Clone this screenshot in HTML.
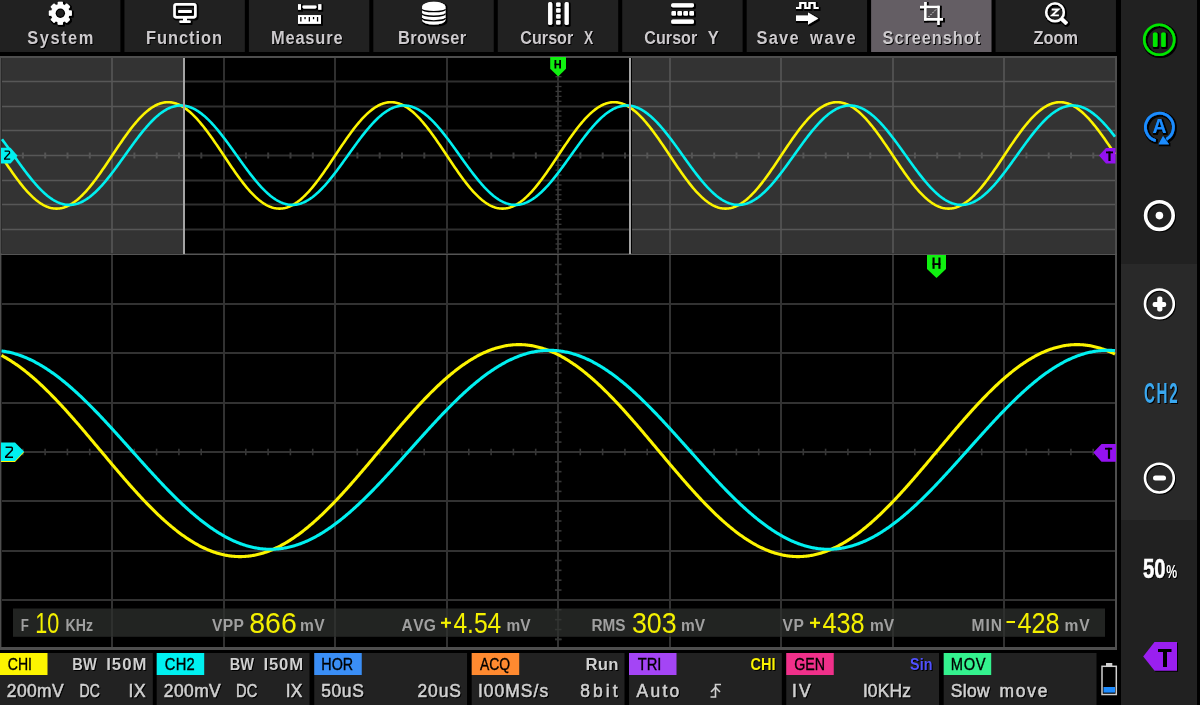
<!DOCTYPE html>
<html><head><meta charset="utf-8"><style>html,body{margin:0;padding:0;background:#000;overflow:hidden}svg{display:block;will-change:transform}</style></head>
<body><svg width="1200" height="705" viewBox="0 0 1200 705">
<rect x="0.00" y="0.00" width="1200.00" height="705.00" fill="#000" />
<rect x="0.00" y="0.00" width="120.40" height="52.00" fill="#212121" />
<rect x="124.44" y="0.00" width="120.40" height="52.00" fill="#212121" />
<rect x="248.89" y="0.00" width="120.40" height="52.00" fill="#212121" />
<rect x="373.33" y="0.00" width="120.40" height="52.00" fill="#212121" />
<rect x="497.78" y="0.00" width="120.40" height="52.00" fill="#212121" />
<rect x="622.22" y="0.00" width="120.40" height="52.00" fill="#212121" />
<rect x="746.67" y="0.00" width="120.40" height="52.00" fill="#212121" />
<rect x="871.11" y="0.00" width="120.40" height="52.00" fill="#645e64" />
<rect x="995.56" y="0.00" width="120.40" height="52.00" fill="#212121" />
<rect x="1121.00" y="0.00" width="76.00" height="264.00" fill="#212121" />
<rect x="1121.00" y="264.00" width="76.00" height="256.00" fill="#292929" />
<rect x="1121.00" y="520.00" width="76.00" height="185.00" fill="#212121" />
<rect x="0.00" y="56.00" width="1117.00" height="594.00" fill="#4e4e4e" />
<rect x="1.40" y="58.00" width="1113.60" height="589.00" fill="#000" />
<rect x="1.40" y="58.00" width="181.60" height="195.30" fill="#333333" />
<rect x="632.00" y="58.00" width="483.00" height="195.30" fill="#333333" />
<line x1="2.00" y1="81.50" x2="183.00" y2="81.50" stroke="#575757" stroke-width="1.4" />
<line x1="185.00" y1="81.50" x2="629.00" y2="81.50" stroke="#2f2f2f" stroke-width="2" />
<line x1="632.00" y1="81.50" x2="1115.00" y2="81.50" stroke="#575757" stroke-width="1.4" />
<line x1="2.00" y1="106.50" x2="183.00" y2="106.50" stroke="#575757" stroke-width="1.4" />
<line x1="185.00" y1="106.50" x2="629.00" y2="106.50" stroke="#2f2f2f" stroke-width="2" />
<line x1="632.00" y1="106.50" x2="1115.00" y2="106.50" stroke="#575757" stroke-width="1.4" />
<line x1="2.00" y1="130.50" x2="183.00" y2="130.50" stroke="#575757" stroke-width="1.4" />
<line x1="185.00" y1="130.50" x2="629.00" y2="130.50" stroke="#2f2f2f" stroke-width="2" />
<line x1="632.00" y1="130.50" x2="1115.00" y2="130.50" stroke="#575757" stroke-width="1.4" />
<line x1="2.00" y1="155.50" x2="183.00" y2="155.50" stroke="#575757" stroke-width="1.4" />
<line x1="185.00" y1="155.50" x2="629.00" y2="155.50" stroke="#2f2f2f" stroke-width="2" />
<line x1="632.00" y1="155.50" x2="1115.00" y2="155.50" stroke="#575757" stroke-width="1.4" />
<line x1="2.00" y1="180.50" x2="183.00" y2="180.50" stroke="#575757" stroke-width="1.4" />
<line x1="185.00" y1="180.50" x2="629.00" y2="180.50" stroke="#2f2f2f" stroke-width="2" />
<line x1="632.00" y1="180.50" x2="1115.00" y2="180.50" stroke="#575757" stroke-width="1.4" />
<line x1="2.00" y1="204.50" x2="183.00" y2="204.50" stroke="#575757" stroke-width="1.4" />
<line x1="185.00" y1="204.50" x2="629.00" y2="204.50" stroke="#2f2f2f" stroke-width="2" />
<line x1="632.00" y1="204.50" x2="1115.00" y2="204.50" stroke="#575757" stroke-width="1.4" />
<line x1="2.00" y1="229.50" x2="183.00" y2="229.50" stroke="#575757" stroke-width="1.4" />
<line x1="185.00" y1="229.50" x2="629.00" y2="229.50" stroke="#2f2f2f" stroke-width="2" />
<line x1="632.00" y1="229.50" x2="1115.00" y2="229.50" stroke="#575757" stroke-width="1.4" />
<line x1="112.00" y1="58.00" x2="112.00" y2="253.30" stroke="#575757" stroke-width="1.6" />
<line x1="224.00" y1="58.00" x2="224.00" y2="253.30" stroke="#2f2f2f" stroke-width="2" />
<line x1="335.00" y1="58.00" x2="335.00" y2="253.30" stroke="#2f2f2f" stroke-width="2" />
<line x1="447.00" y1="58.00" x2="447.00" y2="253.30" stroke="#2f2f2f" stroke-width="2" />
<line x1="558.00" y1="58.00" x2="558.00" y2="253.30" stroke="#2f2f2f" stroke-width="2" />
<line x1="670.00" y1="58.00" x2="670.00" y2="253.30" stroke="#575757" stroke-width="1.6" />
<line x1="781.00" y1="58.00" x2="781.00" y2="253.30" stroke="#575757" stroke-width="1.6" />
<line x1="893.00" y1="58.00" x2="893.00" y2="253.30" stroke="#575757" stroke-width="1.6" />
<line x1="1004.00" y1="58.00" x2="1004.00" y2="253.30" stroke="#575757" stroke-width="1.6" />
<line x1="22.90" y1="152.50" x2="22.90" y2="158.50" stroke="#555555" stroke-width="2" />
<line x1="45.20" y1="152.50" x2="45.20" y2="158.50" stroke="#555555" stroke-width="2" />
<line x1="67.50" y1="152.50" x2="67.50" y2="158.50" stroke="#555555" stroke-width="2" />
<line x1="89.80" y1="152.50" x2="89.80" y2="158.50" stroke="#555555" stroke-width="2" />
<line x1="134.40" y1="152.50" x2="134.40" y2="158.50" stroke="#555555" stroke-width="2" />
<line x1="156.70" y1="152.50" x2="156.70" y2="158.50" stroke="#555555" stroke-width="2" />
<line x1="179.00" y1="152.50" x2="179.00" y2="158.50" stroke="#555555" stroke-width="2" />
<line x1="201.30" y1="152.50" x2="201.30" y2="158.50" stroke="#3a3a3a" stroke-width="2" />
<line x1="245.90" y1="152.50" x2="245.90" y2="158.50" stroke="#3a3a3a" stroke-width="2" />
<line x1="268.20" y1="152.50" x2="268.20" y2="158.50" stroke="#3a3a3a" stroke-width="2" />
<line x1="290.50" y1="152.50" x2="290.50" y2="158.50" stroke="#3a3a3a" stroke-width="2" />
<line x1="312.80" y1="152.50" x2="312.80" y2="158.50" stroke="#3a3a3a" stroke-width="2" />
<line x1="357.40" y1="152.50" x2="357.40" y2="158.50" stroke="#3a3a3a" stroke-width="2" />
<line x1="379.70" y1="152.50" x2="379.70" y2="158.50" stroke="#3a3a3a" stroke-width="2" />
<line x1="402.00" y1="152.50" x2="402.00" y2="158.50" stroke="#3a3a3a" stroke-width="2" />
<line x1="424.30" y1="152.50" x2="424.30" y2="158.50" stroke="#3a3a3a" stroke-width="2" />
<line x1="468.90" y1="152.50" x2="468.90" y2="158.50" stroke="#3a3a3a" stroke-width="2" />
<line x1="491.20" y1="152.50" x2="491.20" y2="158.50" stroke="#3a3a3a" stroke-width="2" />
<line x1="513.50" y1="152.50" x2="513.50" y2="158.50" stroke="#3a3a3a" stroke-width="2" />
<line x1="535.80" y1="152.50" x2="535.80" y2="158.50" stroke="#3a3a3a" stroke-width="2" />
<line x1="580.40" y1="152.50" x2="580.40" y2="158.50" stroke="#3a3a3a" stroke-width="2" />
<line x1="602.70" y1="152.50" x2="602.70" y2="158.50" stroke="#3a3a3a" stroke-width="2" />
<line x1="625.00" y1="152.50" x2="625.00" y2="158.50" stroke="#3a3a3a" stroke-width="2" />
<line x1="647.30" y1="152.50" x2="647.30" y2="158.50" stroke="#555555" stroke-width="2" />
<line x1="691.90" y1="152.50" x2="691.90" y2="158.50" stroke="#555555" stroke-width="2" />
<line x1="714.20" y1="152.50" x2="714.20" y2="158.50" stroke="#555555" stroke-width="2" />
<line x1="736.50" y1="152.50" x2="736.50" y2="158.50" stroke="#555555" stroke-width="2" />
<line x1="758.80" y1="152.50" x2="758.80" y2="158.50" stroke="#555555" stroke-width="2" />
<line x1="803.40" y1="152.50" x2="803.40" y2="158.50" stroke="#555555" stroke-width="2" />
<line x1="825.70" y1="152.50" x2="825.70" y2="158.50" stroke="#555555" stroke-width="2" />
<line x1="848.00" y1="152.50" x2="848.00" y2="158.50" stroke="#555555" stroke-width="2" />
<line x1="870.30" y1="152.50" x2="870.30" y2="158.50" stroke="#555555" stroke-width="2" />
<line x1="914.90" y1="152.50" x2="914.90" y2="158.50" stroke="#555555" stroke-width="2" />
<line x1="937.20" y1="152.50" x2="937.20" y2="158.50" stroke="#555555" stroke-width="2" />
<line x1="959.50" y1="152.50" x2="959.50" y2="158.50" stroke="#555555" stroke-width="2" />
<line x1="981.80" y1="152.50" x2="981.80" y2="158.50" stroke="#555555" stroke-width="2" />
<line x1="1026.40" y1="152.50" x2="1026.40" y2="158.50" stroke="#555555" stroke-width="2" />
<line x1="1048.70" y1="152.50" x2="1048.70" y2="158.50" stroke="#555555" stroke-width="2" />
<line x1="1071.00" y1="152.50" x2="1071.00" y2="158.50" stroke="#555555" stroke-width="2" />
<line x1="1093.30" y1="152.50" x2="1093.30" y2="158.50" stroke="#555555" stroke-width="2" />
<line x1="555.50" y1="61.92" x2="561.50" y2="61.92" stroke="#3a3a3a" stroke-width="1.3" />
<line x1="555.50" y1="66.84" x2="561.50" y2="66.84" stroke="#3a3a3a" stroke-width="1.3" />
<line x1="555.50" y1="71.76" x2="561.50" y2="71.76" stroke="#3a3a3a" stroke-width="1.3" />
<line x1="555.50" y1="76.68" x2="561.50" y2="76.68" stroke="#3a3a3a" stroke-width="1.3" />
<line x1="555.50" y1="86.52" x2="561.50" y2="86.52" stroke="#3a3a3a" stroke-width="1.3" />
<line x1="555.50" y1="91.44" x2="561.50" y2="91.44" stroke="#3a3a3a" stroke-width="1.3" />
<line x1="555.50" y1="96.36" x2="561.50" y2="96.36" stroke="#3a3a3a" stroke-width="1.3" />
<line x1="555.50" y1="101.28" x2="561.50" y2="101.28" stroke="#3a3a3a" stroke-width="1.3" />
<line x1="555.50" y1="111.12" x2="561.50" y2="111.12" stroke="#3a3a3a" stroke-width="1.3" />
<line x1="555.50" y1="116.04" x2="561.50" y2="116.04" stroke="#3a3a3a" stroke-width="1.3" />
<line x1="555.50" y1="120.96" x2="561.50" y2="120.96" stroke="#3a3a3a" stroke-width="1.3" />
<line x1="555.50" y1="125.88" x2="561.50" y2="125.88" stroke="#3a3a3a" stroke-width="1.3" />
<line x1="555.50" y1="135.72" x2="561.50" y2="135.72" stroke="#3a3a3a" stroke-width="1.3" />
<line x1="555.50" y1="140.64" x2="561.50" y2="140.64" stroke="#3a3a3a" stroke-width="1.3" />
<line x1="555.50" y1="145.56" x2="561.50" y2="145.56" stroke="#3a3a3a" stroke-width="1.3" />
<line x1="555.50" y1="150.48" x2="561.50" y2="150.48" stroke="#3a3a3a" stroke-width="1.3" />
<line x1="555.50" y1="160.32" x2="561.50" y2="160.32" stroke="#3a3a3a" stroke-width="1.3" />
<line x1="555.50" y1="165.24" x2="561.50" y2="165.24" stroke="#3a3a3a" stroke-width="1.3" />
<line x1="555.50" y1="170.16" x2="561.50" y2="170.16" stroke="#3a3a3a" stroke-width="1.3" />
<line x1="555.50" y1="175.08" x2="561.50" y2="175.08" stroke="#3a3a3a" stroke-width="1.3" />
<line x1="555.50" y1="184.92" x2="561.50" y2="184.92" stroke="#3a3a3a" stroke-width="1.3" />
<line x1="555.50" y1="189.84" x2="561.50" y2="189.84" stroke="#3a3a3a" stroke-width="1.3" />
<line x1="555.50" y1="194.76" x2="561.50" y2="194.76" stroke="#3a3a3a" stroke-width="1.3" />
<line x1="555.50" y1="199.68" x2="561.50" y2="199.68" stroke="#3a3a3a" stroke-width="1.3" />
<line x1="555.50" y1="209.52" x2="561.50" y2="209.52" stroke="#3a3a3a" stroke-width="1.3" />
<line x1="555.50" y1="214.44" x2="561.50" y2="214.44" stroke="#3a3a3a" stroke-width="1.3" />
<line x1="555.50" y1="219.36" x2="561.50" y2="219.36" stroke="#3a3a3a" stroke-width="1.3" />
<line x1="555.50" y1="224.28" x2="561.50" y2="224.28" stroke="#3a3a3a" stroke-width="1.3" />
<line x1="555.50" y1="234.12" x2="561.50" y2="234.12" stroke="#3a3a3a" stroke-width="1.3" />
<line x1="555.50" y1="239.04" x2="561.50" y2="239.04" stroke="#3a3a3a" stroke-width="1.3" />
<line x1="555.50" y1="243.96" x2="561.50" y2="243.96" stroke="#3a3a3a" stroke-width="1.3" />
<line x1="555.50" y1="248.88" x2="561.50" y2="248.88" stroke="#3a3a3a" stroke-width="1.3" />
<line x1="0.00" y1="254.20" x2="1117.00" y2="254.20" stroke="#555555" stroke-width="1.6" />
<line x1="184.00" y1="58.00" x2="184.00" y2="254.00" stroke="#a4a4a4" stroke-width="2" />
<line x1="630.00" y1="58.00" x2="630.00" y2="254.00" stroke="#a4a4a4" stroke-width="2" />
<line x1="2.00" y1="304.00" x2="1115.00" y2="304.00" stroke="#323232" stroke-width="2" />
<line x1="2.00" y1="353.00" x2="1115.00" y2="353.00" stroke="#323232" stroke-width="2" />
<line x1="2.00" y1="403.00" x2="1115.00" y2="403.00" stroke="#323232" stroke-width="2" />
<line x1="2.00" y1="452.00" x2="1115.00" y2="452.00" stroke="#323232" stroke-width="2" />
<line x1="2.00" y1="501.00" x2="1115.00" y2="501.00" stroke="#323232" stroke-width="2" />
<line x1="2.00" y1="551.00" x2="1115.00" y2="551.00" stroke="#323232" stroke-width="2" />
<line x1="2.00" y1="600.00" x2="1115.00" y2="600.00" stroke="#323232" stroke-width="2" />
<line x1="112.00" y1="255.00" x2="112.00" y2="647.00" stroke="#323232" stroke-width="2" />
<line x1="224.00" y1="255.00" x2="224.00" y2="647.00" stroke="#323232" stroke-width="2" />
<line x1="335.00" y1="255.00" x2="335.00" y2="647.00" stroke="#323232" stroke-width="2" />
<line x1="447.00" y1="255.00" x2="447.00" y2="647.00" stroke="#323232" stroke-width="2" />
<line x1="558.00" y1="255.00" x2="558.00" y2="647.00" stroke="#323232" stroke-width="2" />
<line x1="670.00" y1="255.00" x2="670.00" y2="647.00" stroke="#323232" stroke-width="2" />
<line x1="781.00" y1="255.00" x2="781.00" y2="647.00" stroke="#323232" stroke-width="2" />
<line x1="893.00" y1="255.00" x2="893.00" y2="647.00" stroke="#323232" stroke-width="2" />
<line x1="1004.00" y1="255.00" x2="1004.00" y2="647.00" stroke="#323232" stroke-width="2" />
<line x1="22.80" y1="448.70" x2="22.80" y2="455.30" stroke="#363636" stroke-width="1.6" />
<line x1="45.10" y1="448.70" x2="45.10" y2="455.30" stroke="#363636" stroke-width="1.6" />
<line x1="67.40" y1="448.70" x2="67.40" y2="455.30" stroke="#363636" stroke-width="1.6" />
<line x1="89.70" y1="448.70" x2="89.70" y2="455.30" stroke="#363636" stroke-width="1.6" />
<line x1="134.30" y1="448.70" x2="134.30" y2="455.30" stroke="#363636" stroke-width="1.6" />
<line x1="156.60" y1="448.70" x2="156.60" y2="455.30" stroke="#363636" stroke-width="1.6" />
<line x1="178.90" y1="448.70" x2="178.90" y2="455.30" stroke="#363636" stroke-width="1.6" />
<line x1="201.20" y1="448.70" x2="201.20" y2="455.30" stroke="#363636" stroke-width="1.6" />
<line x1="245.80" y1="448.70" x2="245.80" y2="455.30" stroke="#363636" stroke-width="1.6" />
<line x1="268.10" y1="448.70" x2="268.10" y2="455.30" stroke="#363636" stroke-width="1.6" />
<line x1="290.40" y1="448.70" x2="290.40" y2="455.30" stroke="#363636" stroke-width="1.6" />
<line x1="312.70" y1="448.70" x2="312.70" y2="455.30" stroke="#363636" stroke-width="1.6" />
<line x1="357.30" y1="448.70" x2="357.30" y2="455.30" stroke="#363636" stroke-width="1.6" />
<line x1="379.60" y1="448.70" x2="379.60" y2="455.30" stroke="#363636" stroke-width="1.6" />
<line x1="401.90" y1="448.70" x2="401.90" y2="455.30" stroke="#363636" stroke-width="1.6" />
<line x1="424.20" y1="448.70" x2="424.20" y2="455.30" stroke="#363636" stroke-width="1.6" />
<line x1="468.80" y1="448.70" x2="468.80" y2="455.30" stroke="#363636" stroke-width="1.6" />
<line x1="491.10" y1="448.70" x2="491.10" y2="455.30" stroke="#363636" stroke-width="1.6" />
<line x1="513.40" y1="448.70" x2="513.40" y2="455.30" stroke="#363636" stroke-width="1.6" />
<line x1="535.70" y1="448.70" x2="535.70" y2="455.30" stroke="#363636" stroke-width="1.6" />
<line x1="580.30" y1="448.70" x2="580.30" y2="455.30" stroke="#363636" stroke-width="1.6" />
<line x1="602.60" y1="448.70" x2="602.60" y2="455.30" stroke="#363636" stroke-width="1.6" />
<line x1="624.90" y1="448.70" x2="624.90" y2="455.30" stroke="#363636" stroke-width="1.6" />
<line x1="647.20" y1="448.70" x2="647.20" y2="455.30" stroke="#363636" stroke-width="1.6" />
<line x1="691.80" y1="448.70" x2="691.80" y2="455.30" stroke="#363636" stroke-width="1.6" />
<line x1="714.10" y1="448.70" x2="714.10" y2="455.30" stroke="#363636" stroke-width="1.6" />
<line x1="736.40" y1="448.70" x2="736.40" y2="455.30" stroke="#363636" stroke-width="1.6" />
<line x1="758.70" y1="448.70" x2="758.70" y2="455.30" stroke="#363636" stroke-width="1.6" />
<line x1="803.30" y1="448.70" x2="803.30" y2="455.30" stroke="#363636" stroke-width="1.6" />
<line x1="825.60" y1="448.70" x2="825.60" y2="455.30" stroke="#363636" stroke-width="1.6" />
<line x1="847.90" y1="448.70" x2="847.90" y2="455.30" stroke="#363636" stroke-width="1.6" />
<line x1="870.20" y1="448.70" x2="870.20" y2="455.30" stroke="#363636" stroke-width="1.6" />
<line x1="914.80" y1="448.70" x2="914.80" y2="455.30" stroke="#363636" stroke-width="1.6" />
<line x1="937.10" y1="448.70" x2="937.10" y2="455.30" stroke="#363636" stroke-width="1.6" />
<line x1="959.40" y1="448.70" x2="959.40" y2="455.30" stroke="#363636" stroke-width="1.6" />
<line x1="981.70" y1="448.70" x2="981.70" y2="455.30" stroke="#363636" stroke-width="1.6" />
<line x1="1026.30" y1="448.70" x2="1026.30" y2="455.30" stroke="#363636" stroke-width="1.6" />
<line x1="1048.60" y1="448.70" x2="1048.60" y2="455.30" stroke="#363636" stroke-width="1.6" />
<line x1="1070.90" y1="448.70" x2="1070.90" y2="455.30" stroke="#363636" stroke-width="1.6" />
<line x1="1093.20" y1="448.70" x2="1093.20" y2="455.30" stroke="#363636" stroke-width="1.6" />
<line x1="555.00" y1="264.47" x2="561.50" y2="264.47" stroke="#363636" stroke-width="1.6" />
<line x1="555.00" y1="274.33" x2="561.50" y2="274.33" stroke="#363636" stroke-width="1.6" />
<line x1="555.00" y1="284.20" x2="561.50" y2="284.20" stroke="#363636" stroke-width="1.6" />
<line x1="555.00" y1="294.07" x2="561.50" y2="294.07" stroke="#363636" stroke-width="1.6" />
<line x1="555.00" y1="313.80" x2="561.50" y2="313.80" stroke="#363636" stroke-width="1.6" />
<line x1="555.00" y1="323.67" x2="561.50" y2="323.67" stroke="#363636" stroke-width="1.6" />
<line x1="555.00" y1="333.53" x2="561.50" y2="333.53" stroke="#363636" stroke-width="1.6" />
<line x1="555.00" y1="343.40" x2="561.50" y2="343.40" stroke="#363636" stroke-width="1.6" />
<line x1="555.00" y1="363.13" x2="561.50" y2="363.13" stroke="#363636" stroke-width="1.6" />
<line x1="555.00" y1="373.00" x2="561.50" y2="373.00" stroke="#363636" stroke-width="1.6" />
<line x1="555.00" y1="382.87" x2="561.50" y2="382.87" stroke="#363636" stroke-width="1.6" />
<line x1="555.00" y1="392.73" x2="561.50" y2="392.73" stroke="#363636" stroke-width="1.6" />
<line x1="555.00" y1="412.47" x2="561.50" y2="412.47" stroke="#363636" stroke-width="1.6" />
<line x1="555.00" y1="422.33" x2="561.50" y2="422.33" stroke="#363636" stroke-width="1.6" />
<line x1="555.00" y1="432.20" x2="561.50" y2="432.20" stroke="#363636" stroke-width="1.6" />
<line x1="555.00" y1="442.07" x2="561.50" y2="442.07" stroke="#363636" stroke-width="1.6" />
<line x1="555.00" y1="461.80" x2="561.50" y2="461.80" stroke="#363636" stroke-width="1.6" />
<line x1="555.00" y1="471.67" x2="561.50" y2="471.67" stroke="#363636" stroke-width="1.6" />
<line x1="555.00" y1="481.53" x2="561.50" y2="481.53" stroke="#363636" stroke-width="1.6" />
<line x1="555.00" y1="491.40" x2="561.50" y2="491.40" stroke="#363636" stroke-width="1.6" />
<line x1="555.00" y1="511.13" x2="561.50" y2="511.13" stroke="#363636" stroke-width="1.6" />
<line x1="555.00" y1="521.00" x2="561.50" y2="521.00" stroke="#363636" stroke-width="1.6" />
<line x1="555.00" y1="530.86" x2="561.50" y2="530.86" stroke="#363636" stroke-width="1.6" />
<line x1="555.00" y1="540.73" x2="561.50" y2="540.73" stroke="#363636" stroke-width="1.6" />
<line x1="555.00" y1="560.46" x2="561.50" y2="560.46" stroke="#363636" stroke-width="1.6" />
<line x1="555.00" y1="570.33" x2="561.50" y2="570.33" stroke="#363636" stroke-width="1.6" />
<line x1="555.00" y1="580.20" x2="561.50" y2="580.20" stroke="#363636" stroke-width="1.6" />
<line x1="555.00" y1="590.06" x2="561.50" y2="590.06" stroke="#363636" stroke-width="1.6" />
<line x1="555.00" y1="609.80" x2="561.50" y2="609.80" stroke="#363636" stroke-width="1.6" />
<line x1="555.00" y1="619.66" x2="561.50" y2="619.66" stroke="#363636" stroke-width="1.6" />
<line x1="555.00" y1="629.53" x2="561.50" y2="629.53" stroke="#363636" stroke-width="1.6" />
<line x1="555.00" y1="639.40" x2="561.50" y2="639.40" stroke="#363636" stroke-width="1.6" />
<polyline points="2.0,157.27 3.0,158.77 4.0,160.26 5.0,161.76 6.0,163.24 7.0,164.72 8.0,166.19 9.0,167.66 10.0,169.11 11.0,170.55 12.0,171.98 13.0,173.40 14.0,174.80 15.0,176.19 16.0,177.56 17.0,178.92 18.0,180.25 19.0,181.57 20.0,182.86 21.0,184.13 22.0,185.38 23.0,186.61 24.0,187.81 25.0,188.99 26.0,190.14 27.0,191.26 28.0,192.35 29.0,193.41 30.0,194.45 31.0,195.45 32.0,196.42 33.0,197.36 34.0,198.26 35.0,199.13 36.0,199.97 37.0,200.77 38.0,201.53 39.0,202.26 40.0,202.95 41.0,203.61 42.0,204.22 43.0,204.80 44.0,205.33 45.0,205.83 46.0,206.29 47.0,206.71 48.0,207.08 49.0,207.42 50.0,207.71 51.0,207.96 52.0,208.17 53.0,208.34 54.0,208.47 55.0,208.55 56.0,208.59 57.0,208.59 58.0,208.55 59.0,208.47 60.0,208.34 61.0,208.17 62.0,207.96 63.0,207.71 64.0,207.42 65.0,207.08 66.0,206.71 67.0,206.29 68.0,205.83 69.0,205.33 70.0,204.80 71.0,204.22 72.0,203.61 73.0,202.95 74.0,202.26 75.0,201.53 76.0,200.77 77.0,199.97 78.0,199.13 79.0,198.26 80.0,197.36 81.0,196.42 82.0,195.45 83.0,194.45 84.0,193.41 85.0,192.35 86.0,191.26 87.0,190.14 88.0,188.99 89.0,187.81 90.0,186.61 91.0,185.38 92.0,184.13 93.0,182.86 94.0,181.57 95.0,180.25 96.0,178.92 97.0,177.56 98.0,176.19 99.0,174.80 100.0,173.40 101.0,171.98 102.0,170.55 103.0,169.11 104.0,167.66 105.0,166.19 106.0,164.72 107.0,163.24 108.0,161.76 109.0,160.26 110.0,158.77 111.0,157.27 112.0,155.77 113.0,154.28 114.0,152.78 115.0,151.28 116.0,149.79 117.0,148.30 118.0,146.82 119.0,145.34 120.0,143.88 121.0,142.42 122.0,140.97 123.0,139.53 124.0,138.11 125.0,136.70 126.0,135.30 127.0,133.92 128.0,132.56 129.0,131.21 130.0,129.89 131.0,128.58 132.0,127.30 133.0,126.04 134.0,124.80 135.0,123.59 136.0,122.40 137.0,121.24 138.0,120.10 139.0,118.99 140.0,117.91 141.0,116.87 142.0,115.85 143.0,114.86 144.0,113.91 145.0,112.99 146.0,112.10 147.0,111.24 148.0,110.43 149.0,109.64 150.0,108.90 151.0,108.19 152.0,107.52 153.0,106.88 154.0,106.29 155.0,105.73 156.0,105.21 157.0,104.73 158.0,104.30 159.0,103.90 160.0,103.55 161.0,103.23 162.0,102.96 163.0,102.73 164.0,102.54 165.0,102.39 166.0,102.28 167.0,102.22 168.0,102.20 169.0,102.22 170.0,102.28 171.0,102.39 172.0,102.54 173.0,102.73 174.0,102.96 175.0,103.23 176.0,103.55 177.0,103.90 178.0,104.30 179.0,104.73 180.0,105.21 181.0,105.73 182.0,106.29 183.0,106.88 184.0,107.52 185.0,108.19 186.0,108.90 187.0,109.64 188.0,110.43 189.0,111.24 190.0,112.10 191.0,112.99 192.0,113.91 193.0,114.86 194.0,115.85 195.0,116.87 196.0,117.91 197.0,118.99 198.0,120.10 199.0,121.24 200.0,122.40 201.0,123.59 202.0,124.80 203.0,126.04 204.0,127.30 205.0,128.58 206.0,129.89 207.0,131.21 208.0,132.56 209.0,133.92 210.0,135.30 211.0,136.70 212.0,138.11 213.0,139.53 214.0,140.97 215.0,142.42 216.0,143.88 217.0,145.34 218.0,146.82 219.0,148.30 220.0,149.79 221.0,151.28 222.0,152.78 223.0,154.28 224.0,155.77 225.0,157.27 226.0,158.77 227.0,160.26 228.0,161.76 229.0,163.24 230.0,164.72 231.0,166.19 232.0,167.66 233.0,169.11 234.0,170.55 235.0,171.98 236.0,173.40 237.0,174.80 238.0,176.19 239.0,177.56 240.0,178.92 241.0,180.25 242.0,181.57 243.0,182.86 244.0,184.13 245.0,185.38 246.0,186.61 247.0,187.81 248.0,188.99 249.0,190.14 250.0,191.26 251.0,192.35 252.0,193.41 253.0,194.45 254.0,195.45 255.0,196.42 256.0,197.36 257.0,198.26 258.0,199.13 259.0,199.97 260.0,200.77 261.0,201.53 262.0,202.26 263.0,202.95 264.0,203.61 265.0,204.22 266.0,204.80 267.0,205.33 268.0,205.83 269.0,206.29 270.0,206.71 271.0,207.08 272.0,207.42 273.0,207.71 274.0,207.96 275.0,208.17 276.0,208.34 277.0,208.47 278.0,208.55 279.0,208.59 280.0,208.59 281.0,208.55 282.0,208.47 283.0,208.34 284.0,208.17 285.0,207.96 286.0,207.71 287.0,207.42 288.0,207.08 289.0,206.71 290.0,206.29 291.0,205.83 292.0,205.33 293.0,204.80 294.0,204.22 295.0,203.61 296.0,202.95 297.0,202.26 298.0,201.53 299.0,200.77 300.0,199.97 301.0,199.13 302.0,198.26 303.0,197.36 304.0,196.42 305.0,195.45 306.0,194.45 307.0,193.41 308.0,192.35 309.0,191.26 310.0,190.14 311.0,188.99 312.0,187.81 313.0,186.61 314.0,185.38 315.0,184.13 316.0,182.86 317.0,181.57 318.0,180.25 319.0,178.92 320.0,177.56 321.0,176.19 322.0,174.80 323.0,173.40 324.0,171.98 325.0,170.55 326.0,169.11 327.0,167.66 328.0,166.19 329.0,164.72 330.0,163.24 331.0,161.76 332.0,160.26 333.0,158.77 334.0,157.27 335.0,155.77 336.0,154.28 337.0,152.78 338.0,151.28 339.0,149.79 340.0,148.30 341.0,146.82 342.0,145.34 343.0,143.88 344.0,142.42 345.0,140.97 346.0,139.53 347.0,138.11 348.0,136.70 349.0,135.30 350.0,133.92 351.0,132.56 352.0,131.21 353.0,129.89 354.0,128.58 355.0,127.30 356.0,126.04 357.0,124.80 358.0,123.59 359.0,122.40 360.0,121.24 361.0,120.10 362.0,118.99 363.0,117.91 364.0,116.87 365.0,115.85 366.0,114.86 367.0,113.91 368.0,112.99 369.0,112.10 370.0,111.24 371.0,110.43 372.0,109.64 373.0,108.90 374.0,108.19 375.0,107.52 376.0,106.88 377.0,106.29 378.0,105.73 379.0,105.21 380.0,104.73 381.0,104.30 382.0,103.90 383.0,103.55 384.0,103.23 385.0,102.96 386.0,102.73 387.0,102.54 388.0,102.39 389.0,102.28 390.0,102.22 391.0,102.20 392.0,102.22 393.0,102.28 394.0,102.39 395.0,102.54 396.0,102.73 397.0,102.96 398.0,103.23 399.0,103.55 400.0,103.90 401.0,104.30 402.0,104.73 403.0,105.21 404.0,105.73 405.0,106.29 406.0,106.88 407.0,107.52 408.0,108.19 409.0,108.90 410.0,109.64 411.0,110.43 412.0,111.24 413.0,112.10 414.0,112.99 415.0,113.91 416.0,114.86 417.0,115.85 418.0,116.87 419.0,117.91 420.0,118.99 421.0,120.10 422.0,121.24 423.0,122.40 424.0,123.59 425.0,124.80 426.0,126.04 427.0,127.30 428.0,128.58 429.0,129.89 430.0,131.21 431.0,132.56 432.0,133.92 433.0,135.30 434.0,136.70 435.0,138.11 436.0,139.53 437.0,140.97 438.0,142.42 439.0,143.88 440.0,145.34 441.0,146.82 442.0,148.30 443.0,149.79 444.0,151.28 445.0,152.78 446.0,154.28 447.0,155.77 448.0,157.27 449.0,158.77 450.0,160.26 451.0,161.76 452.0,163.24 453.0,164.72 454.0,166.19 455.0,167.66 456.0,169.11 457.0,170.55 458.0,171.98 459.0,173.40 460.0,174.80 461.0,176.19 462.0,177.56 463.0,178.92 464.0,180.25 465.0,181.57 466.0,182.86 467.0,184.13 468.0,185.38 469.0,186.61 470.0,187.81 471.0,188.99 472.0,190.14 473.0,191.26 474.0,192.35 475.0,193.41 476.0,194.45 477.0,195.45 478.0,196.42 479.0,197.36 480.0,198.26 481.0,199.13 482.0,199.97 483.0,200.77 484.0,201.53 485.0,202.26 486.0,202.95 487.0,203.61 488.0,204.22 489.0,204.80 490.0,205.33 491.0,205.83 492.0,206.29 493.0,206.71 494.0,207.08 495.0,207.42 496.0,207.71 497.0,207.96 498.0,208.17 499.0,208.34 500.0,208.47 501.0,208.55 502.0,208.59 503.0,208.59 504.0,208.55 505.0,208.47 506.0,208.34 507.0,208.17 508.0,207.96 509.0,207.71 510.0,207.42 511.0,207.08 512.0,206.71 513.0,206.29 514.0,205.83 515.0,205.33 516.0,204.80 517.0,204.22 518.0,203.61 519.0,202.95 520.0,202.26 521.0,201.53 522.0,200.77 523.0,199.97 524.0,199.13 525.0,198.26 526.0,197.36 527.0,196.42 528.0,195.45 529.0,194.45 530.0,193.41 531.0,192.35 532.0,191.26 533.0,190.14 534.0,188.99 535.0,187.81 536.0,186.61 537.0,185.38 538.0,184.13 539.0,182.86 540.0,181.57 541.0,180.25 542.0,178.92 543.0,177.56 544.0,176.19 545.0,174.80 546.0,173.40 547.0,171.98 548.0,170.55 549.0,169.11 550.0,167.66 551.0,166.19 552.0,164.72 553.0,163.24 554.0,161.76 555.0,160.26 556.0,158.77 557.0,157.27 558.0,155.77 559.0,154.28 560.0,152.78 561.0,151.28 562.0,149.79 563.0,148.30 564.0,146.82 565.0,145.34 566.0,143.88 567.0,142.42 568.0,140.97 569.0,139.53 570.0,138.11 571.0,136.70 572.0,135.30 573.0,133.92 574.0,132.56 575.0,131.21 576.0,129.89 577.0,128.58 578.0,127.30 579.0,126.04 580.0,124.80 581.0,123.59 582.0,122.40 583.0,121.24 584.0,120.10 585.0,118.99 586.0,117.91 587.0,116.87 588.0,115.85 589.0,114.86 590.0,113.91 591.0,112.99 592.0,112.10 593.0,111.24 594.0,110.43 595.0,109.64 596.0,108.90 597.0,108.19 598.0,107.52 599.0,106.88 600.0,106.29 601.0,105.73 602.0,105.21 603.0,104.73 604.0,104.30 605.0,103.90 606.0,103.55 607.0,103.23 608.0,102.96 609.0,102.73 610.0,102.54 611.0,102.39 612.0,102.28 613.0,102.22 614.0,102.20 615.0,102.22 616.0,102.28 617.0,102.39 618.0,102.54 619.0,102.73 620.0,102.96 621.0,103.23 622.0,103.55 623.0,103.90 624.0,104.30 625.0,104.73 626.0,105.21 627.0,105.73 628.0,106.29 629.0,106.88 630.0,107.52 631.0,108.19 632.0,108.90 633.0,109.64 634.0,110.43 635.0,111.24 636.0,112.10 637.0,112.99 638.0,113.91 639.0,114.86 640.0,115.85 641.0,116.87 642.0,117.91 643.0,118.99 644.0,120.10 645.0,121.24 646.0,122.40 647.0,123.59 648.0,124.80 649.0,126.04 650.0,127.30 651.0,128.58 652.0,129.89 653.0,131.21 654.0,132.56 655.0,133.92 656.0,135.30 657.0,136.70 658.0,138.11 659.0,139.53 660.0,140.97 661.0,142.42 662.0,143.88 663.0,145.34 664.0,146.82 665.0,148.30 666.0,149.79 667.0,151.28 668.0,152.78 669.0,154.28 670.0,155.77 671.0,157.27 672.0,158.77 673.0,160.26 674.0,161.76 675.0,163.24 676.0,164.72 677.0,166.19 678.0,167.66 679.0,169.11 680.0,170.55 681.0,171.98 682.0,173.40 683.0,174.80 684.0,176.19 685.0,177.56 686.0,178.92 687.0,180.25 688.0,181.57 689.0,182.86 690.0,184.13 691.0,185.38 692.0,186.61 693.0,187.81 694.0,188.99 695.0,190.14 696.0,191.26 697.0,192.35 698.0,193.41 699.0,194.45 700.0,195.45 701.0,196.42 702.0,197.36 703.0,198.26 704.0,199.13 705.0,199.97 706.0,200.77 707.0,201.53 708.0,202.26 709.0,202.95 710.0,203.61 711.0,204.22 712.0,204.80 713.0,205.33 714.0,205.83 715.0,206.29 716.0,206.71 717.0,207.08 718.0,207.42 719.0,207.71 720.0,207.96 721.0,208.17 722.0,208.34 723.0,208.47 724.0,208.55 725.0,208.59 726.0,208.59 727.0,208.55 728.0,208.47 729.0,208.34 730.0,208.17 731.0,207.96 732.0,207.71 733.0,207.42 734.0,207.08 735.0,206.71 736.0,206.29 737.0,205.83 738.0,205.33 739.0,204.80 740.0,204.22 741.0,203.61 742.0,202.95 743.0,202.26 744.0,201.53 745.0,200.77 746.0,199.97 747.0,199.13 748.0,198.26 749.0,197.36 750.0,196.42 751.0,195.45 752.0,194.45 753.0,193.41 754.0,192.35 755.0,191.26 756.0,190.14 757.0,188.99 758.0,187.81 759.0,186.61 760.0,185.38 761.0,184.13 762.0,182.86 763.0,181.57 764.0,180.25 765.0,178.92 766.0,177.56 767.0,176.19 768.0,174.80 769.0,173.40 770.0,171.98 771.0,170.55 772.0,169.11 773.0,167.66 774.0,166.19 775.0,164.72 776.0,163.24 777.0,161.76 778.0,160.26 779.0,158.77 780.0,157.27 781.0,155.77 782.0,154.28 783.0,152.78 784.0,151.28 785.0,149.79 786.0,148.30 787.0,146.82 788.0,145.34 789.0,143.88 790.0,142.42 791.0,140.97 792.0,139.53 793.0,138.11 794.0,136.70 795.0,135.30 796.0,133.92 797.0,132.56 798.0,131.21 799.0,129.89 800.0,128.58 801.0,127.30 802.0,126.04 803.0,124.80 804.0,123.59 805.0,122.40 806.0,121.24 807.0,120.10 808.0,118.99 809.0,117.91 810.0,116.87 811.0,115.85 812.0,114.86 813.0,113.91 814.0,112.99 815.0,112.10 816.0,111.24 817.0,110.43 818.0,109.64 819.0,108.90 820.0,108.19 821.0,107.52 822.0,106.88 823.0,106.29 824.0,105.73 825.0,105.21 826.0,104.73 827.0,104.30 828.0,103.90 829.0,103.55 830.0,103.23 831.0,102.96 832.0,102.73 833.0,102.54 834.0,102.39 835.0,102.28 836.0,102.22 837.0,102.20 838.0,102.22 839.0,102.28 840.0,102.39 841.0,102.54 842.0,102.73 843.0,102.96 844.0,103.23 845.0,103.55 846.0,103.90 847.0,104.30 848.0,104.73 849.0,105.21 850.0,105.73 851.0,106.29 852.0,106.88 853.0,107.52 854.0,108.19 855.0,108.90 856.0,109.64 857.0,110.43 858.0,111.24 859.0,112.10 860.0,112.99 861.0,113.91 862.0,114.86 863.0,115.85 864.0,116.87 865.0,117.91 866.0,118.99 867.0,120.10 868.0,121.24 869.0,122.40 870.0,123.59 871.0,124.80 872.0,126.04 873.0,127.30 874.0,128.58 875.0,129.89 876.0,131.21 877.0,132.56 878.0,133.92 879.0,135.30 880.0,136.70 881.0,138.11 882.0,139.53 883.0,140.97 884.0,142.42 885.0,143.88 886.0,145.34 887.0,146.82 888.0,148.30 889.0,149.79 890.0,151.28 891.0,152.78 892.0,154.28 893.0,155.77 894.0,157.27 895.0,158.77 896.0,160.26 897.0,161.76 898.0,163.24 899.0,164.72 900.0,166.19 901.0,167.66 902.0,169.11 903.0,170.55 904.0,171.98 905.0,173.40 906.0,174.80 907.0,176.19 908.0,177.56 909.0,178.92 910.0,180.25 911.0,181.57 912.0,182.86 913.0,184.13 914.0,185.38 915.0,186.61 916.0,187.81 917.0,188.99 918.0,190.14 919.0,191.26 920.0,192.35 921.0,193.41 922.0,194.45 923.0,195.45 924.0,196.42 925.0,197.36 926.0,198.26 927.0,199.13 928.0,199.97 929.0,200.77 930.0,201.53 931.0,202.26 932.0,202.95 933.0,203.61 934.0,204.22 935.0,204.80 936.0,205.33 937.0,205.83 938.0,206.29 939.0,206.71 940.0,207.08 941.0,207.42 942.0,207.71 943.0,207.96 944.0,208.17 945.0,208.34 946.0,208.47 947.0,208.55 948.0,208.59 949.0,208.59 950.0,208.55 951.0,208.47 952.0,208.34 953.0,208.17 954.0,207.96 955.0,207.71 956.0,207.42 957.0,207.08 958.0,206.71 959.0,206.29 960.0,205.83 961.0,205.33 962.0,204.80 963.0,204.22 964.0,203.61 965.0,202.95 966.0,202.26 967.0,201.53 968.0,200.77 969.0,199.97 970.0,199.13 971.0,198.26 972.0,197.36 973.0,196.42 974.0,195.45 975.0,194.45 976.0,193.41 977.0,192.35 978.0,191.26 979.0,190.14 980.0,188.99 981.0,187.81 982.0,186.61 983.0,185.38 984.0,184.13 985.0,182.86 986.0,181.57 987.0,180.25 988.0,178.92 989.0,177.56 990.0,176.19 991.0,174.80 992.0,173.40 993.0,171.98 994.0,170.55 995.0,169.11 996.0,167.66 997.0,166.19 998.0,164.72 999.0,163.24 1000.0,161.76 1001.0,160.26 1002.0,158.77 1003.0,157.27 1004.0,155.77 1005.0,154.28 1006.0,152.78 1007.0,151.28 1008.0,149.79 1009.0,148.30 1010.0,146.82 1011.0,145.34 1012.0,143.88 1013.0,142.42 1014.0,140.97 1015.0,139.53 1016.0,138.11 1017.0,136.70 1018.0,135.30 1019.0,133.92 1020.0,132.56 1021.0,131.21 1022.0,129.89 1023.0,128.58 1024.0,127.30 1025.0,126.04 1026.0,124.80 1027.0,123.59 1028.0,122.40 1029.0,121.24 1030.0,120.10 1031.0,118.99 1032.0,117.91 1033.0,116.87 1034.0,115.85 1035.0,114.86 1036.0,113.91 1037.0,112.99 1038.0,112.10 1039.0,111.24 1040.0,110.43 1041.0,109.64 1042.0,108.90 1043.0,108.19 1044.0,107.52 1045.0,106.88 1046.0,106.29 1047.0,105.73 1048.0,105.21 1049.0,104.73 1050.0,104.30 1051.0,103.90 1052.0,103.55 1053.0,103.23 1054.0,102.96 1055.0,102.73 1056.0,102.54 1057.0,102.39 1058.0,102.28 1059.0,102.22 1060.0,102.20 1061.0,102.22 1062.0,102.28 1063.0,102.39 1064.0,102.54 1065.0,102.73 1066.0,102.96 1067.0,103.23 1068.0,103.55 1069.0,103.90 1070.0,104.30 1071.0,104.73 1072.0,105.21 1073.0,105.73 1074.0,106.29 1075.0,106.88 1076.0,107.52 1077.0,108.19 1078.0,108.90 1079.0,109.64 1080.0,110.43 1081.0,111.24 1082.0,112.10 1083.0,112.99 1084.0,113.91 1085.0,114.86 1086.0,115.85 1087.0,116.87 1088.0,117.91 1089.0,118.99 1090.0,120.10 1091.0,121.24 1092.0,122.40 1093.0,123.59 1094.0,124.80 1095.0,126.04 1096.0,127.30 1097.0,128.58 1098.0,129.89 1099.0,131.21 1100.0,132.56 1101.0,133.92 1102.0,135.30 1103.0,136.70 1104.0,138.11 1105.0,139.53 1106.0,140.97 1107.0,142.42 1108.0,143.88 1109.0,145.34 1110.0,146.82 1111.0,148.30 1112.0,149.79 1113.0,151.28 1114.0,152.78 1115.0,154.28" fill="none" stroke="#fcf400" stroke-width="2.6" stroke-linejoin="round"/>
<polyline points="2.0,139.31 3.0,140.64 4.0,141.99 5.0,143.34 6.0,144.71 7.0,146.08 8.0,147.46 9.0,148.85 10.0,150.24 11.0,151.63 12.0,153.03 13.0,154.43 14.0,155.83 15.0,157.23 16.0,158.63 17.0,160.02 18.0,161.42 19.0,162.80 20.0,164.18 21.0,165.56 22.0,166.92 23.0,168.28 24.0,169.62 25.0,170.96 26.0,172.28 27.0,173.59 28.0,174.88 29.0,176.16 30.0,177.42 31.0,178.66 32.0,179.89 33.0,181.09 34.0,182.28 35.0,183.44 36.0,184.58 37.0,185.70 38.0,186.79 39.0,187.86 40.0,188.90 41.0,189.92 42.0,190.91 43.0,191.87 44.0,192.80 45.0,193.70 46.0,194.57 47.0,195.41 48.0,196.22 49.0,196.99 50.0,197.73 51.0,198.44 52.0,199.11 53.0,199.75 54.0,200.35 55.0,200.92 56.0,201.45 57.0,201.95 58.0,202.40 59.0,202.82 60.0,203.20 61.0,203.55 62.0,203.85 63.0,204.12 64.0,204.35 65.0,204.54 66.0,204.69 67.0,204.80 68.0,204.87 69.0,204.90 70.0,204.89 71.0,204.84 72.0,204.76 73.0,204.63 74.0,204.46 75.0,204.26 76.0,204.02 77.0,203.73 78.0,203.41 79.0,203.06 80.0,202.66 81.0,202.22 82.0,201.75 83.0,201.24 84.0,200.70 85.0,200.12 86.0,199.50 87.0,198.85 88.0,198.16 89.0,197.44 90.0,196.68 91.0,195.90 92.0,195.08 93.0,194.22 94.0,193.34 95.0,192.43 96.0,191.49 97.0,190.52 98.0,189.52 99.0,188.49 100.0,187.44 101.0,186.36 102.0,185.26 103.0,184.13 104.0,182.98 105.0,181.81 106.0,180.61 107.0,179.40 108.0,178.17 109.0,176.92 110.0,175.65 111.0,174.36 112.0,173.07 113.0,171.75 114.0,170.42 115.0,169.09 116.0,167.74 117.0,166.38 118.0,165.01 119.0,163.63 120.0,162.25 121.0,160.86 122.0,159.47 123.0,158.07 124.0,156.67 125.0,155.27 126.0,153.87 127.0,152.47 128.0,151.07 129.0,149.68 130.0,148.29 131.0,146.91 132.0,145.53 133.0,144.16 134.0,142.80 135.0,141.45 136.0,140.11 137.0,138.78 138.0,137.47 139.0,136.16 140.0,134.88 141.0,133.61 142.0,132.36 143.0,131.12 144.0,129.91 145.0,128.71 146.0,127.54 147.0,126.38 148.0,125.26 149.0,124.15 150.0,123.07 151.0,122.01 152.0,120.98 153.0,119.98 154.0,119.01 155.0,118.06 156.0,117.15 157.0,116.26 158.0,115.41 159.0,114.58 160.0,113.79 161.0,113.04 162.0,112.31 163.0,111.62 164.0,110.96 165.0,110.34 166.0,109.76 167.0,109.21 168.0,108.70 169.0,108.22 170.0,107.78 171.0,107.38 172.0,107.02 173.0,106.70 174.0,106.41 175.0,106.16 176.0,105.95 177.0,105.78 178.0,105.65 179.0,105.56 180.0,105.51 181.0,105.50 182.0,105.53 183.0,105.60 184.0,105.70 185.0,105.85 186.0,106.03 187.0,106.26 188.0,106.52 189.0,106.82 190.0,107.16 191.0,107.54 192.0,107.95 193.0,108.41 194.0,108.90 195.0,109.43 196.0,109.99 197.0,110.59 198.0,111.22 199.0,111.89 200.0,112.60 201.0,113.33 202.0,114.11 203.0,114.91 204.0,115.75 205.0,116.61 206.0,117.51 207.0,118.44 208.0,119.39 209.0,120.38 210.0,121.39 211.0,122.43 212.0,123.50 213.0,124.59 214.0,125.70 215.0,126.84 216.0,128.00 217.0,129.19 218.0,130.39 219.0,131.61 220.0,132.86 221.0,134.11 222.0,135.39 223.0,136.68 224.0,137.99 225.0,139.31 226.0,140.64 227.0,141.99 228.0,143.34 229.0,144.71 230.0,146.08 231.0,147.46 232.0,148.85 233.0,150.24 234.0,151.63 235.0,153.03 236.0,154.43 237.0,155.83 238.0,157.23 239.0,158.63 240.0,160.02 241.0,161.42 242.0,162.80 243.0,164.18 244.0,165.56 245.0,166.92 246.0,168.28 247.0,169.62 248.0,170.96 249.0,172.28 250.0,173.59 251.0,174.88 252.0,176.16 253.0,177.42 254.0,178.66 255.0,179.89 256.0,181.09 257.0,182.28 258.0,183.44 259.0,184.58 260.0,185.70 261.0,186.79 262.0,187.86 263.0,188.90 264.0,189.92 265.0,190.91 266.0,191.87 267.0,192.80 268.0,193.70 269.0,194.57 270.0,195.41 271.0,196.22 272.0,196.99 273.0,197.73 274.0,198.44 275.0,199.11 276.0,199.75 277.0,200.35 278.0,200.92 279.0,201.45 280.0,201.95 281.0,202.40 282.0,202.82 283.0,203.20 284.0,203.55 285.0,203.85 286.0,204.12 287.0,204.35 288.0,204.54 289.0,204.69 290.0,204.80 291.0,204.87 292.0,204.90 293.0,204.89 294.0,204.84 295.0,204.76 296.0,204.63 297.0,204.46 298.0,204.26 299.0,204.02 300.0,203.73 301.0,203.41 302.0,203.06 303.0,202.66 304.0,202.22 305.0,201.75 306.0,201.24 307.0,200.70 308.0,200.12 309.0,199.50 310.0,198.85 311.0,198.16 312.0,197.44 313.0,196.68 314.0,195.90 315.0,195.08 316.0,194.22 317.0,193.34 318.0,192.43 319.0,191.49 320.0,190.52 321.0,189.52 322.0,188.49 323.0,187.44 324.0,186.36 325.0,185.26 326.0,184.13 327.0,182.98 328.0,181.81 329.0,180.61 330.0,179.40 331.0,178.17 332.0,176.92 333.0,175.65 334.0,174.36 335.0,173.07 336.0,171.75 337.0,170.42 338.0,169.09 339.0,167.74 340.0,166.38 341.0,165.01 342.0,163.63 343.0,162.25 344.0,160.86 345.0,159.47 346.0,158.07 347.0,156.67 348.0,155.27 349.0,153.87 350.0,152.47 351.0,151.07 352.0,149.68 353.0,148.29 354.0,146.91 355.0,145.53 356.0,144.16 357.0,142.80 358.0,141.45 359.0,140.11 360.0,138.78 361.0,137.47 362.0,136.16 363.0,134.88 364.0,133.61 365.0,132.36 366.0,131.12 367.0,129.91 368.0,128.71 369.0,127.54 370.0,126.38 371.0,125.26 372.0,124.15 373.0,123.07 374.0,122.01 375.0,120.98 376.0,119.98 377.0,119.01 378.0,118.06 379.0,117.15 380.0,116.26 381.0,115.41 382.0,114.58 383.0,113.79 384.0,113.04 385.0,112.31 386.0,111.62 387.0,110.96 388.0,110.34 389.0,109.76 390.0,109.21 391.0,108.70 392.0,108.22 393.0,107.78 394.0,107.38 395.0,107.02 396.0,106.70 397.0,106.41 398.0,106.16 399.0,105.95 400.0,105.78 401.0,105.65 402.0,105.56 403.0,105.51 404.0,105.50 405.0,105.53 406.0,105.60 407.0,105.70 408.0,105.85 409.0,106.03 410.0,106.26 411.0,106.52 412.0,106.82 413.0,107.16 414.0,107.54 415.0,107.95 416.0,108.41 417.0,108.90 418.0,109.43 419.0,109.99 420.0,110.59 421.0,111.22 422.0,111.89 423.0,112.60 424.0,113.33 425.0,114.11 426.0,114.91 427.0,115.75 428.0,116.61 429.0,117.51 430.0,118.44 431.0,119.39 432.0,120.38 433.0,121.39 434.0,122.43 435.0,123.50 436.0,124.59 437.0,125.70 438.0,126.84 439.0,128.00 440.0,129.19 441.0,130.39 442.0,131.61 443.0,132.86 444.0,134.11 445.0,135.39 446.0,136.68 447.0,137.99 448.0,139.31 449.0,140.64 450.0,141.99 451.0,143.34 452.0,144.71 453.0,146.08 454.0,147.46 455.0,148.85 456.0,150.24 457.0,151.63 458.0,153.03 459.0,154.43 460.0,155.83 461.0,157.23 462.0,158.63 463.0,160.02 464.0,161.42 465.0,162.80 466.0,164.18 467.0,165.56 468.0,166.92 469.0,168.28 470.0,169.62 471.0,170.96 472.0,172.28 473.0,173.59 474.0,174.88 475.0,176.16 476.0,177.42 477.0,178.66 478.0,179.89 479.0,181.09 480.0,182.28 481.0,183.44 482.0,184.58 483.0,185.70 484.0,186.79 485.0,187.86 486.0,188.90 487.0,189.92 488.0,190.91 489.0,191.87 490.0,192.80 491.0,193.70 492.0,194.57 493.0,195.41 494.0,196.22 495.0,196.99 496.0,197.73 497.0,198.44 498.0,199.11 499.0,199.75 500.0,200.35 501.0,200.92 502.0,201.45 503.0,201.95 504.0,202.40 505.0,202.82 506.0,203.20 507.0,203.55 508.0,203.85 509.0,204.12 510.0,204.35 511.0,204.54 512.0,204.69 513.0,204.80 514.0,204.87 515.0,204.90 516.0,204.89 517.0,204.84 518.0,204.76 519.0,204.63 520.0,204.46 521.0,204.26 522.0,204.02 523.0,203.73 524.0,203.41 525.0,203.06 526.0,202.66 527.0,202.22 528.0,201.75 529.0,201.24 530.0,200.70 531.0,200.12 532.0,199.50 533.0,198.85 534.0,198.16 535.0,197.44 536.0,196.68 537.0,195.90 538.0,195.08 539.0,194.22 540.0,193.34 541.0,192.43 542.0,191.49 543.0,190.52 544.0,189.52 545.0,188.49 546.0,187.44 547.0,186.36 548.0,185.26 549.0,184.13 550.0,182.98 551.0,181.81 552.0,180.61 553.0,179.40 554.0,178.17 555.0,176.92 556.0,175.65 557.0,174.36 558.0,173.07 559.0,171.75 560.0,170.42 561.0,169.09 562.0,167.74 563.0,166.38 564.0,165.01 565.0,163.63 566.0,162.25 567.0,160.86 568.0,159.47 569.0,158.07 570.0,156.67 571.0,155.27 572.0,153.87 573.0,152.47 574.0,151.07 575.0,149.68 576.0,148.29 577.0,146.91 578.0,145.53 579.0,144.16 580.0,142.80 581.0,141.45 582.0,140.11 583.0,138.78 584.0,137.47 585.0,136.16 586.0,134.88 587.0,133.61 588.0,132.36 589.0,131.12 590.0,129.91 591.0,128.71 592.0,127.54 593.0,126.38 594.0,125.26 595.0,124.15 596.0,123.07 597.0,122.01 598.0,120.98 599.0,119.98 600.0,119.01 601.0,118.06 602.0,117.15 603.0,116.26 604.0,115.41 605.0,114.58 606.0,113.79 607.0,113.04 608.0,112.31 609.0,111.62 610.0,110.96 611.0,110.34 612.0,109.76 613.0,109.21 614.0,108.70 615.0,108.22 616.0,107.78 617.0,107.38 618.0,107.02 619.0,106.70 620.0,106.41 621.0,106.16 622.0,105.95 623.0,105.78 624.0,105.65 625.0,105.56 626.0,105.51 627.0,105.50 628.0,105.53 629.0,105.60 630.0,105.70 631.0,105.85 632.0,106.03 633.0,106.26 634.0,106.52 635.0,106.82 636.0,107.16 637.0,107.54 638.0,107.95 639.0,108.41 640.0,108.90 641.0,109.43 642.0,109.99 643.0,110.59 644.0,111.22 645.0,111.89 646.0,112.60 647.0,113.33 648.0,114.11 649.0,114.91 650.0,115.75 651.0,116.61 652.0,117.51 653.0,118.44 654.0,119.39 655.0,120.38 656.0,121.39 657.0,122.43 658.0,123.50 659.0,124.59 660.0,125.70 661.0,126.84 662.0,128.00 663.0,129.19 664.0,130.39 665.0,131.61 666.0,132.86 667.0,134.11 668.0,135.39 669.0,136.68 670.0,137.99 671.0,139.31 672.0,140.64 673.0,141.99 674.0,143.34 675.0,144.71 676.0,146.08 677.0,147.46 678.0,148.85 679.0,150.24 680.0,151.63 681.0,153.03 682.0,154.43 683.0,155.83 684.0,157.23 685.0,158.63 686.0,160.02 687.0,161.42 688.0,162.80 689.0,164.18 690.0,165.56 691.0,166.92 692.0,168.28 693.0,169.62 694.0,170.96 695.0,172.28 696.0,173.59 697.0,174.88 698.0,176.16 699.0,177.42 700.0,178.66 701.0,179.89 702.0,181.09 703.0,182.28 704.0,183.44 705.0,184.58 706.0,185.70 707.0,186.79 708.0,187.86 709.0,188.90 710.0,189.92 711.0,190.91 712.0,191.87 713.0,192.80 714.0,193.70 715.0,194.57 716.0,195.41 717.0,196.22 718.0,196.99 719.0,197.73 720.0,198.44 721.0,199.11 722.0,199.75 723.0,200.35 724.0,200.92 725.0,201.45 726.0,201.95 727.0,202.40 728.0,202.82 729.0,203.20 730.0,203.55 731.0,203.85 732.0,204.12 733.0,204.35 734.0,204.54 735.0,204.69 736.0,204.80 737.0,204.87 738.0,204.90 739.0,204.89 740.0,204.84 741.0,204.76 742.0,204.63 743.0,204.46 744.0,204.26 745.0,204.02 746.0,203.73 747.0,203.41 748.0,203.06 749.0,202.66 750.0,202.22 751.0,201.75 752.0,201.24 753.0,200.70 754.0,200.12 755.0,199.50 756.0,198.85 757.0,198.16 758.0,197.44 759.0,196.68 760.0,195.90 761.0,195.08 762.0,194.22 763.0,193.34 764.0,192.43 765.0,191.49 766.0,190.52 767.0,189.52 768.0,188.49 769.0,187.44 770.0,186.36 771.0,185.26 772.0,184.13 773.0,182.98 774.0,181.81 775.0,180.61 776.0,179.40 777.0,178.17 778.0,176.92 779.0,175.65 780.0,174.36 781.0,173.07 782.0,171.75 783.0,170.42 784.0,169.09 785.0,167.74 786.0,166.38 787.0,165.01 788.0,163.63 789.0,162.25 790.0,160.86 791.0,159.47 792.0,158.07 793.0,156.67 794.0,155.27 795.0,153.87 796.0,152.47 797.0,151.07 798.0,149.68 799.0,148.29 800.0,146.91 801.0,145.53 802.0,144.16 803.0,142.80 804.0,141.45 805.0,140.11 806.0,138.78 807.0,137.47 808.0,136.16 809.0,134.88 810.0,133.61 811.0,132.36 812.0,131.12 813.0,129.91 814.0,128.71 815.0,127.54 816.0,126.38 817.0,125.26 818.0,124.15 819.0,123.07 820.0,122.01 821.0,120.98 822.0,119.98 823.0,119.01 824.0,118.06 825.0,117.15 826.0,116.26 827.0,115.41 828.0,114.58 829.0,113.79 830.0,113.04 831.0,112.31 832.0,111.62 833.0,110.96 834.0,110.34 835.0,109.76 836.0,109.21 837.0,108.70 838.0,108.22 839.0,107.78 840.0,107.38 841.0,107.02 842.0,106.70 843.0,106.41 844.0,106.16 845.0,105.95 846.0,105.78 847.0,105.65 848.0,105.56 849.0,105.51 850.0,105.50 851.0,105.53 852.0,105.60 853.0,105.70 854.0,105.85 855.0,106.03 856.0,106.26 857.0,106.52 858.0,106.82 859.0,107.16 860.0,107.54 861.0,107.95 862.0,108.41 863.0,108.90 864.0,109.43 865.0,109.99 866.0,110.59 867.0,111.22 868.0,111.89 869.0,112.60 870.0,113.33 871.0,114.11 872.0,114.91 873.0,115.75 874.0,116.61 875.0,117.51 876.0,118.44 877.0,119.39 878.0,120.38 879.0,121.39 880.0,122.43 881.0,123.50 882.0,124.59 883.0,125.70 884.0,126.84 885.0,128.00 886.0,129.19 887.0,130.39 888.0,131.61 889.0,132.86 890.0,134.11 891.0,135.39 892.0,136.68 893.0,137.99 894.0,139.31 895.0,140.64 896.0,141.99 897.0,143.34 898.0,144.71 899.0,146.08 900.0,147.46 901.0,148.85 902.0,150.24 903.0,151.63 904.0,153.03 905.0,154.43 906.0,155.83 907.0,157.23 908.0,158.63 909.0,160.02 910.0,161.42 911.0,162.80 912.0,164.18 913.0,165.56 914.0,166.92 915.0,168.28 916.0,169.62 917.0,170.96 918.0,172.28 919.0,173.59 920.0,174.88 921.0,176.16 922.0,177.42 923.0,178.66 924.0,179.89 925.0,181.09 926.0,182.28 927.0,183.44 928.0,184.58 929.0,185.70 930.0,186.79 931.0,187.86 932.0,188.90 933.0,189.92 934.0,190.91 935.0,191.87 936.0,192.80 937.0,193.70 938.0,194.57 939.0,195.41 940.0,196.22 941.0,196.99 942.0,197.73 943.0,198.44 944.0,199.11 945.0,199.75 946.0,200.35 947.0,200.92 948.0,201.45 949.0,201.95 950.0,202.40 951.0,202.82 952.0,203.20 953.0,203.55 954.0,203.85 955.0,204.12 956.0,204.35 957.0,204.54 958.0,204.69 959.0,204.80 960.0,204.87 961.0,204.90 962.0,204.89 963.0,204.84 964.0,204.76 965.0,204.63 966.0,204.46 967.0,204.26 968.0,204.02 969.0,203.73 970.0,203.41 971.0,203.06 972.0,202.66 973.0,202.22 974.0,201.75 975.0,201.24 976.0,200.70 977.0,200.12 978.0,199.50 979.0,198.85 980.0,198.16 981.0,197.44 982.0,196.68 983.0,195.90 984.0,195.08 985.0,194.22 986.0,193.34 987.0,192.43 988.0,191.49 989.0,190.52 990.0,189.52 991.0,188.49 992.0,187.44 993.0,186.36 994.0,185.26 995.0,184.13 996.0,182.98 997.0,181.81 998.0,180.61 999.0,179.40 1000.0,178.17 1001.0,176.92 1002.0,175.65 1003.0,174.36 1004.0,173.07 1005.0,171.75 1006.0,170.42 1007.0,169.09 1008.0,167.74 1009.0,166.38 1010.0,165.01 1011.0,163.63 1012.0,162.25 1013.0,160.86 1014.0,159.47 1015.0,158.07 1016.0,156.67 1017.0,155.27 1018.0,153.87 1019.0,152.47 1020.0,151.07 1021.0,149.68 1022.0,148.29 1023.0,146.91 1024.0,145.53 1025.0,144.16 1026.0,142.80 1027.0,141.45 1028.0,140.11 1029.0,138.78 1030.0,137.47 1031.0,136.16 1032.0,134.88 1033.0,133.61 1034.0,132.36 1035.0,131.12 1036.0,129.91 1037.0,128.71 1038.0,127.54 1039.0,126.38 1040.0,125.26 1041.0,124.15 1042.0,123.07 1043.0,122.01 1044.0,120.98 1045.0,119.98 1046.0,119.01 1047.0,118.06 1048.0,117.15 1049.0,116.26 1050.0,115.41 1051.0,114.58 1052.0,113.79 1053.0,113.04 1054.0,112.31 1055.0,111.62 1056.0,110.96 1057.0,110.34 1058.0,109.76 1059.0,109.21 1060.0,108.70 1061.0,108.22 1062.0,107.78 1063.0,107.38 1064.0,107.02 1065.0,106.70 1066.0,106.41 1067.0,106.16 1068.0,105.95 1069.0,105.78 1070.0,105.65 1071.0,105.56 1072.0,105.51 1073.0,105.50 1074.0,105.53 1075.0,105.60 1076.0,105.70 1077.0,105.85 1078.0,106.03 1079.0,106.26 1080.0,106.52 1081.0,106.82 1082.0,107.16 1083.0,107.54 1084.0,107.95 1085.0,108.41 1086.0,108.90 1087.0,109.43 1088.0,109.99 1089.0,110.59 1090.0,111.22 1091.0,111.89 1092.0,112.60 1093.0,113.33 1094.0,114.11 1095.0,114.91 1096.0,115.75 1097.0,116.61 1098.0,117.51 1099.0,118.44 1100.0,119.39 1101.0,120.38 1102.0,121.39 1103.0,122.43 1104.0,123.50 1105.0,124.59 1106.0,125.70 1107.0,126.84 1108.0,128.00 1109.0,129.19 1110.0,130.39 1111.0,131.61 1112.0,132.86 1113.0,134.11 1114.0,135.39 1115.0,136.68" fill="none" stroke="#00f0f0" stroke-width="2.6" stroke-linejoin="round"/>
<line x1="184.00" y1="58.00" x2="184.00" y2="254.00" stroke="#a4a4a4" stroke-width="2" />
<line x1="630.00" y1="58.00" x2="630.00" y2="254.00" stroke="#a4a4a4" stroke-width="2" />
<g>
<polyline points="1.5,355.43 2.5,355.96 3.5,356.51 4.5,357.06 5.5,357.63 6.5,358.21 7.5,358.80 8.5,359.40 9.5,360.02 10.5,360.64 11.5,361.28 12.5,361.93 13.5,362.59 14.5,363.26 15.5,363.94 16.5,364.63 17.5,365.34 18.5,366.05 19.5,366.78 20.5,367.51 21.5,368.26 22.5,369.02 23.5,369.78 24.5,370.56 25.5,371.35 26.5,372.15 27.5,372.95 28.5,373.77 29.5,374.60 30.5,375.44 31.5,376.28 32.5,377.14 33.5,378.00 34.5,378.88 35.5,379.76 36.5,380.65 37.5,381.55 38.5,382.46 39.5,383.38 40.5,384.31 41.5,385.25 42.5,386.19 43.5,387.14 44.5,388.10 45.5,389.07 46.5,390.05 47.5,391.03 48.5,392.02 49.5,393.02 50.5,394.02 51.5,395.04 52.5,396.06 53.5,397.08 54.5,398.12 55.5,399.16 56.5,400.20 57.5,401.26 58.5,402.32 59.5,403.38 60.5,404.45 61.5,405.53 62.5,406.62 63.5,407.70 64.5,408.80 65.5,409.90 66.5,411.00 67.5,412.11 68.5,413.23 69.5,414.35 70.5,415.47 71.5,416.60 72.5,417.73 73.5,418.87 74.5,420.01 75.5,421.15 76.5,422.30 77.5,423.45 78.5,424.61 79.5,425.77 80.5,426.93 81.5,428.09 82.5,429.26 83.5,430.43 84.5,431.61 85.5,432.78 86.5,433.96 87.5,435.14 88.5,436.32 89.5,437.50 90.5,438.69 91.5,439.88 92.5,441.06 93.5,442.25 94.5,443.44 95.5,444.64 96.5,445.83 97.5,447.02 98.5,448.21 99.5,449.41 100.5,450.60 101.5,451.79 102.5,452.99 103.5,454.18 104.5,455.37 105.5,456.56 106.5,457.76 107.5,458.95 108.5,460.14 109.5,461.32 110.5,462.51 111.5,463.70 112.5,464.88 113.5,466.06 114.5,467.24 115.5,468.42 116.5,469.59 117.5,470.77 118.5,471.94 119.5,473.11 120.5,474.27 121.5,475.43 122.5,476.59 123.5,477.75 124.5,478.90 125.5,480.05 126.5,481.19 127.5,482.33 128.5,483.47 129.5,484.60 130.5,485.73 131.5,486.85 132.5,487.97 133.5,489.09 134.5,490.20 135.5,491.30 136.5,492.40 137.5,493.50 138.5,494.58 139.5,495.67 140.5,496.75 141.5,497.82 142.5,498.88 143.5,499.94 144.5,501.00 145.5,502.04 146.5,503.08 147.5,504.12 148.5,505.14 149.5,506.16 150.5,507.18 151.5,508.18 152.5,509.18 153.5,510.17 154.5,511.15 155.5,512.13 156.5,513.10 157.5,514.06 158.5,515.01 159.5,515.95 160.5,516.89 161.5,517.82 162.5,518.74 163.5,519.65 164.5,520.55 165.5,521.44 166.5,522.32 167.5,523.20 168.5,524.06 169.5,524.92 170.5,525.76 171.5,526.60 172.5,527.43 173.5,528.25 174.5,529.05 175.5,529.85 176.5,530.64 177.5,531.42 178.5,532.18 179.5,532.94 180.5,533.69 181.5,534.42 182.5,535.15 183.5,535.86 184.5,536.57 185.5,537.26 186.5,537.94 187.5,538.61 188.5,539.27 189.5,539.92 190.5,540.56 191.5,541.18 192.5,541.80 193.5,542.40 194.5,542.99 195.5,543.57 196.5,544.14 197.5,544.69 198.5,545.24 199.5,545.77 200.5,546.29 201.5,546.79 202.5,547.29 203.5,547.77 204.5,548.24 205.5,548.70 206.5,549.15 207.5,549.58 208.5,550.00 209.5,550.41 210.5,550.81 211.5,551.19 212.5,551.56 213.5,551.92 214.5,552.26 215.5,552.59 216.5,552.91 217.5,553.22 218.5,553.51 219.5,553.79 220.5,554.05 221.5,554.31 222.5,554.55 223.5,554.78 224.5,554.99 225.5,555.19 226.5,555.38 227.5,555.55 228.5,555.71 229.5,555.86 230.5,555.99 231.5,556.11 232.5,556.22 233.5,556.32 234.5,556.40 235.5,556.46 236.5,556.52 237.5,556.56 238.5,556.58 239.5,556.60 240.5,556.60 241.5,556.58 242.5,556.56 243.5,556.52 244.5,556.46 245.5,556.40 246.5,556.32 247.5,556.22 248.5,556.11 249.5,555.99 250.5,555.86 251.5,555.71 252.5,555.55 253.5,555.38 254.5,555.19 255.5,554.99 256.5,554.78 257.5,554.55 258.5,554.31 259.5,554.05 260.5,553.79 261.5,553.51 262.5,553.22 263.5,552.91 264.5,552.59 265.5,552.26 266.5,551.92 267.5,551.56 268.5,551.19 269.5,550.81 270.5,550.41 271.5,550.00 272.5,549.58 273.5,549.15 274.5,548.70 275.5,548.24 276.5,547.77 277.5,547.29 278.5,546.79 279.5,546.29 280.5,545.77 281.5,545.24 282.5,544.69 283.5,544.14 284.5,543.57 285.5,542.99 286.5,542.40 287.5,541.80 288.5,541.18 289.5,540.56 290.5,539.92 291.5,539.27 292.5,538.61 293.5,537.94 294.5,537.26 295.5,536.57 296.5,535.86 297.5,535.15 298.5,534.42 299.5,533.69 300.5,532.94 301.5,532.18 302.5,531.42 303.5,530.64 304.5,529.85 305.5,529.05 306.5,528.25 307.5,527.43 308.5,526.60 309.5,525.76 310.5,524.92 311.5,524.06 312.5,523.20 313.5,522.32 314.5,521.44 315.5,520.55 316.5,519.65 317.5,518.74 318.5,517.82 319.5,516.89 320.5,515.95 321.5,515.01 322.5,514.06 323.5,513.10 324.5,512.13 325.5,511.15 326.5,510.17 327.5,509.18 328.5,508.18 329.5,507.18 330.5,506.16 331.5,505.14 332.5,504.12 333.5,503.08 334.5,502.04 335.5,501.00 336.5,499.94 337.5,498.88 338.5,497.82 339.5,496.75 340.5,495.67 341.5,494.58 342.5,493.50 343.5,492.40 344.5,491.30 345.5,490.20 346.5,489.09 347.5,487.97 348.5,486.85 349.5,485.73 350.5,484.60 351.5,483.47 352.5,482.33 353.5,481.19 354.5,480.05 355.5,478.90 356.5,477.75 357.5,476.59 358.5,475.43 359.5,474.27 360.5,473.11 361.5,471.94 362.5,470.77 363.5,469.59 364.5,468.42 365.5,467.24 366.5,466.06 367.5,464.88 368.5,463.70 369.5,462.51 370.5,461.32 371.5,460.14 372.5,458.95 373.5,457.76 374.5,456.56 375.5,455.37 376.5,454.18 377.5,452.99 378.5,451.79 379.5,450.60 380.5,449.41 381.5,448.21 382.5,447.02 383.5,445.83 384.5,444.64 385.5,443.44 386.5,442.25 387.5,441.06 388.5,439.88 389.5,438.69 390.5,437.50 391.5,436.32 392.5,435.14 393.5,433.96 394.5,432.78 395.5,431.61 396.5,430.43 397.5,429.26 398.5,428.09 399.5,426.93 400.5,425.77 401.5,424.61 402.5,423.45 403.5,422.30 404.5,421.15 405.5,420.01 406.5,418.87 407.5,417.73 408.5,416.60 409.5,415.47 410.5,414.35 411.5,413.23 412.5,412.11 413.5,411.00 414.5,409.90 415.5,408.80 416.5,407.70 417.5,406.62 418.5,405.53 419.5,404.45 420.5,403.38 421.5,402.32 422.5,401.26 423.5,400.20 424.5,399.16 425.5,398.12 426.5,397.08 427.5,396.06 428.5,395.04 429.5,394.02 430.5,393.02 431.5,392.02 432.5,391.03 433.5,390.05 434.5,389.07 435.5,388.10 436.5,387.14 437.5,386.19 438.5,385.25 439.5,384.31 440.5,383.38 441.5,382.46 442.5,381.55 443.5,380.65 444.5,379.76 445.5,378.88 446.5,378.00 447.5,377.14 448.5,376.28 449.5,375.44 450.5,374.60 451.5,373.77 452.5,372.95 453.5,372.15 454.5,371.35 455.5,370.56 456.5,369.78 457.5,369.02 458.5,368.26 459.5,367.51 460.5,366.78 461.5,366.05 462.5,365.34 463.5,364.63 464.5,363.94 465.5,363.26 466.5,362.59 467.5,361.93 468.5,361.28 469.5,360.64 470.5,360.02 471.5,359.40 472.5,358.80 473.5,358.21 474.5,357.63 475.5,357.06 476.5,356.51 477.5,355.96 478.5,355.43 479.5,354.91 480.5,354.41 481.5,353.91 482.5,353.43 483.5,352.96 484.5,352.50 485.5,352.05 486.5,351.62 487.5,351.20 488.5,350.79 489.5,350.39 490.5,350.01 491.5,349.64 492.5,349.28 493.5,348.94 494.5,348.61 495.5,348.29 496.5,347.98 497.5,347.69 498.5,347.41 499.5,347.15 500.5,346.89 501.5,346.65 502.5,346.42 503.5,346.21 504.5,346.01 505.5,345.82 506.5,345.65 507.5,345.49 508.5,345.34 509.5,345.21 510.5,345.09 511.5,344.98 512.5,344.88 513.5,344.80 514.5,344.74 515.5,344.68 516.5,344.64 517.5,344.62 518.5,344.60 519.5,344.60 520.5,344.62 521.5,344.64 522.5,344.68 523.5,344.74 524.5,344.80 525.5,344.88 526.5,344.98 527.5,345.09 528.5,345.21 529.5,345.34 530.5,345.49 531.5,345.65 532.5,345.82 533.5,346.01 534.5,346.21 535.5,346.42 536.5,346.65 537.5,346.89 538.5,347.15 539.5,347.41 540.5,347.69 541.5,347.98 542.5,348.29 543.5,348.61 544.5,348.94 545.5,349.28 546.5,349.64 547.5,350.01 548.5,350.39 549.5,350.79 550.5,351.20 551.5,351.62 552.5,352.05 553.5,352.50 554.5,352.96 555.5,353.43 556.5,353.91 557.5,354.41 558.5,354.91 559.5,355.43 560.5,355.96 561.5,356.51 562.5,357.06 563.5,357.63 564.5,358.21 565.5,358.80 566.5,359.40 567.5,360.02 568.5,360.64 569.5,361.28 570.5,361.93 571.5,362.59 572.5,363.26 573.5,363.94 574.5,364.63 575.5,365.34 576.5,366.05 577.5,366.78 578.5,367.51 579.5,368.26 580.5,369.02 581.5,369.78 582.5,370.56 583.5,371.35 584.5,372.15 585.5,372.95 586.5,373.77 587.5,374.60 588.5,375.44 589.5,376.28 590.5,377.14 591.5,378.00 592.5,378.88 593.5,379.76 594.5,380.65 595.5,381.55 596.5,382.46 597.5,383.38 598.5,384.31 599.5,385.25 600.5,386.19 601.5,387.14 602.5,388.10 603.5,389.07 604.5,390.05 605.5,391.03 606.5,392.02 607.5,393.02 608.5,394.02 609.5,395.04 610.5,396.06 611.5,397.08 612.5,398.12 613.5,399.16 614.5,400.20 615.5,401.26 616.5,402.32 617.5,403.38 618.5,404.45 619.5,405.53 620.5,406.62 621.5,407.70 622.5,408.80 623.5,409.90 624.5,411.00 625.5,412.11 626.5,413.23 627.5,414.35 628.5,415.47 629.5,416.60 630.5,417.73 631.5,418.87 632.5,420.01 633.5,421.15 634.5,422.30 635.5,423.45 636.5,424.61 637.5,425.77 638.5,426.93 639.5,428.09 640.5,429.26 641.5,430.43 642.5,431.61 643.5,432.78 644.5,433.96 645.5,435.14 646.5,436.32 647.5,437.50 648.5,438.69 649.5,439.88 650.5,441.06 651.5,442.25 652.5,443.44 653.5,444.64 654.5,445.83 655.5,447.02 656.5,448.21 657.5,449.41 658.5,450.60 659.5,451.79 660.5,452.99 661.5,454.18 662.5,455.37 663.5,456.56 664.5,457.76 665.5,458.95 666.5,460.14 667.5,461.32 668.5,462.51 669.5,463.70 670.5,464.88 671.5,466.06 672.5,467.24 673.5,468.42 674.5,469.59 675.5,470.77 676.5,471.94 677.5,473.11 678.5,474.27 679.5,475.43 680.5,476.59 681.5,477.75 682.5,478.90 683.5,480.05 684.5,481.19 685.5,482.33 686.5,483.47 687.5,484.60 688.5,485.73 689.5,486.85 690.5,487.97 691.5,489.09 692.5,490.20 693.5,491.30 694.5,492.40 695.5,493.50 696.5,494.58 697.5,495.67 698.5,496.75 699.5,497.82 700.5,498.88 701.5,499.94 702.5,501.00 703.5,502.04 704.5,503.08 705.5,504.12 706.5,505.14 707.5,506.16 708.5,507.18 709.5,508.18 710.5,509.18 711.5,510.17 712.5,511.15 713.5,512.13 714.5,513.10 715.5,514.06 716.5,515.01 717.5,515.95 718.5,516.89 719.5,517.82 720.5,518.74 721.5,519.65 722.5,520.55 723.5,521.44 724.5,522.32 725.5,523.20 726.5,524.06 727.5,524.92 728.5,525.76 729.5,526.60 730.5,527.43 731.5,528.25 732.5,529.05 733.5,529.85 734.5,530.64 735.5,531.42 736.5,532.18 737.5,532.94 738.5,533.69 739.5,534.42 740.5,535.15 741.5,535.86 742.5,536.57 743.5,537.26 744.5,537.94 745.5,538.61 746.5,539.27 747.5,539.92 748.5,540.56 749.5,541.18 750.5,541.80 751.5,542.40 752.5,542.99 753.5,543.57 754.5,544.14 755.5,544.69 756.5,545.24 757.5,545.77 758.5,546.29 759.5,546.79 760.5,547.29 761.5,547.77 762.5,548.24 763.5,548.70 764.5,549.15 765.5,549.58 766.5,550.00 767.5,550.41 768.5,550.81 769.5,551.19 770.5,551.56 771.5,551.92 772.5,552.26 773.5,552.59 774.5,552.91 775.5,553.22 776.5,553.51 777.5,553.79 778.5,554.05 779.5,554.31 780.5,554.55 781.5,554.78 782.5,554.99 783.5,555.19 784.5,555.38 785.5,555.55 786.5,555.71 787.5,555.86 788.5,555.99 789.5,556.11 790.5,556.22 791.5,556.32 792.5,556.40 793.5,556.46 794.5,556.52 795.5,556.56 796.5,556.58 797.5,556.60 798.5,556.60 799.5,556.58 800.5,556.56 801.5,556.52 802.5,556.46 803.5,556.40 804.5,556.32 805.5,556.22 806.5,556.11 807.5,555.99 808.5,555.86 809.5,555.71 810.5,555.55 811.5,555.38 812.5,555.19 813.5,554.99 814.5,554.78 815.5,554.55 816.5,554.31 817.5,554.05 818.5,553.79 819.5,553.51 820.5,553.22 821.5,552.91 822.5,552.59 823.5,552.26 824.5,551.92 825.5,551.56 826.5,551.19 827.5,550.81 828.5,550.41 829.5,550.00 830.5,549.58 831.5,549.15 832.5,548.70 833.5,548.24 834.5,547.77 835.5,547.29 836.5,546.79 837.5,546.29 838.5,545.77 839.5,545.24 840.5,544.69 841.5,544.14 842.5,543.57 843.5,542.99 844.5,542.40 845.5,541.80 846.5,541.18 847.5,540.56 848.5,539.92 849.5,539.27 850.5,538.61 851.5,537.94 852.5,537.26 853.5,536.57 854.5,535.86 855.5,535.15 856.5,534.42 857.5,533.69 858.5,532.94 859.5,532.18 860.5,531.42 861.5,530.64 862.5,529.85 863.5,529.05 864.5,528.25 865.5,527.43 866.5,526.60 867.5,525.76 868.5,524.92 869.5,524.06 870.5,523.20 871.5,522.32 872.5,521.44 873.5,520.55 874.5,519.65 875.5,518.74 876.5,517.82 877.5,516.89 878.5,515.95 879.5,515.01 880.5,514.06 881.5,513.10 882.5,512.13 883.5,511.15 884.5,510.17 885.5,509.18 886.5,508.18 887.5,507.18 888.5,506.16 889.5,505.14 890.5,504.12 891.5,503.08 892.5,502.04 893.5,501.00 894.5,499.94 895.5,498.88 896.5,497.82 897.5,496.75 898.5,495.67 899.5,494.58 900.5,493.50 901.5,492.40 902.5,491.30 903.5,490.20 904.5,489.09 905.5,487.97 906.5,486.85 907.5,485.73 908.5,484.60 909.5,483.47 910.5,482.33 911.5,481.19 912.5,480.05 913.5,478.90 914.5,477.75 915.5,476.59 916.5,475.43 917.5,474.27 918.5,473.11 919.5,471.94 920.5,470.77 921.5,469.59 922.5,468.42 923.5,467.24 924.5,466.06 925.5,464.88 926.5,463.70 927.5,462.51 928.5,461.32 929.5,460.14 930.5,458.95 931.5,457.76 932.5,456.56 933.5,455.37 934.5,454.18 935.5,452.99 936.5,451.79 937.5,450.60 938.5,449.41 939.5,448.21 940.5,447.02 941.5,445.83 942.5,444.64 943.5,443.44 944.5,442.25 945.5,441.06 946.5,439.88 947.5,438.69 948.5,437.50 949.5,436.32 950.5,435.14 951.5,433.96 952.5,432.78 953.5,431.61 954.5,430.43 955.5,429.26 956.5,428.09 957.5,426.93 958.5,425.77 959.5,424.61 960.5,423.45 961.5,422.30 962.5,421.15 963.5,420.01 964.5,418.87 965.5,417.73 966.5,416.60 967.5,415.47 968.5,414.35 969.5,413.23 970.5,412.11 971.5,411.00 972.5,409.90 973.5,408.80 974.5,407.70 975.5,406.62 976.5,405.53 977.5,404.45 978.5,403.38 979.5,402.32 980.5,401.26 981.5,400.20 982.5,399.16 983.5,398.12 984.5,397.08 985.5,396.06 986.5,395.04 987.5,394.02 988.5,393.02 989.5,392.02 990.5,391.03 991.5,390.05 992.5,389.07 993.5,388.10 994.5,387.14 995.5,386.19 996.5,385.25 997.5,384.31 998.5,383.38 999.5,382.46 1000.5,381.55 1001.5,380.65 1002.5,379.76 1003.5,378.88 1004.5,378.00 1005.5,377.14 1006.5,376.28 1007.5,375.44 1008.5,374.60 1009.5,373.77 1010.5,372.95 1011.5,372.15 1012.5,371.35 1013.5,370.56 1014.5,369.78 1015.5,369.02 1016.5,368.26 1017.5,367.51 1018.5,366.78 1019.5,366.05 1020.5,365.34 1021.5,364.63 1022.5,363.94 1023.5,363.26 1024.5,362.59 1025.5,361.93 1026.5,361.28 1027.5,360.64 1028.5,360.02 1029.5,359.40 1030.5,358.80 1031.5,358.21 1032.5,357.63 1033.5,357.06 1034.5,356.51 1035.5,355.96 1036.5,355.43 1037.5,354.91 1038.5,354.41 1039.5,353.91 1040.5,353.43 1041.5,352.96 1042.5,352.50 1043.5,352.05 1044.5,351.62 1045.5,351.20 1046.5,350.79 1047.5,350.39 1048.5,350.01 1049.5,349.64 1050.5,349.28 1051.5,348.94 1052.5,348.61 1053.5,348.29 1054.5,347.98 1055.5,347.69 1056.5,347.41 1057.5,347.15 1058.5,346.89 1059.5,346.65 1060.5,346.42 1061.5,346.21 1062.5,346.01 1063.5,345.82 1064.5,345.65 1065.5,345.49 1066.5,345.34 1067.5,345.21 1068.5,345.09 1069.5,344.98 1070.5,344.88 1071.5,344.80 1072.5,344.74 1073.5,344.68 1074.5,344.64 1075.5,344.62 1076.5,344.60 1077.5,344.60 1078.5,344.62 1079.5,344.64 1080.5,344.68 1081.5,344.74 1082.5,344.80 1083.5,344.88 1084.5,344.98 1085.5,345.09 1086.5,345.21 1087.5,345.34 1088.5,345.49 1089.5,345.65 1090.5,345.82 1091.5,346.01 1092.5,346.21 1093.5,346.42 1094.5,346.65 1095.5,346.89 1096.5,347.15 1097.5,347.41 1098.5,347.69 1099.5,347.98 1100.5,348.29 1101.5,348.61 1102.5,348.94 1103.5,349.28 1104.5,349.64 1105.5,350.01 1106.5,350.39 1107.5,350.79 1108.5,351.20 1109.5,351.62 1110.5,352.05 1111.5,352.50 1112.5,352.96 1113.5,353.43 1114.5,353.91 1115.0,354.16" fill="none" stroke="#fcf400" stroke-width="3.1" stroke-linejoin="round"/>
<polyline points="1.5,350.93 2.5,351.06 3.5,351.21 4.5,351.36 5.5,351.53 6.5,351.72 7.5,351.91 8.5,352.12 9.5,352.34 10.5,352.57 11.5,352.81 12.5,353.07 13.5,353.34 14.5,353.62 15.5,353.91 16.5,354.22 17.5,354.53 18.5,354.86 19.5,355.20 20.5,355.56 21.5,355.92 22.5,356.30 23.5,356.69 24.5,357.09 25.5,357.50 26.5,357.93 27.5,358.36 28.5,358.81 29.5,359.27 30.5,359.74 31.5,360.22 32.5,360.72 33.5,361.22 34.5,361.74 35.5,362.26 36.5,362.80 37.5,363.35 38.5,363.91 39.5,364.48 40.5,365.06 41.5,365.66 42.5,366.26 43.5,366.87 44.5,367.50 45.5,368.13 46.5,368.78 47.5,369.43 48.5,370.10 49.5,370.78 50.5,371.46 51.5,372.16 52.5,372.86 53.5,373.58 54.5,374.30 55.5,375.04 56.5,375.78 57.5,376.54 58.5,377.30 59.5,378.07 60.5,378.85 61.5,379.64 62.5,380.44 63.5,381.25 64.5,382.06 65.5,382.89 66.5,383.72 67.5,384.56 68.5,385.41 69.5,386.27 70.5,387.14 71.5,388.01 72.5,388.90 73.5,389.79 74.5,390.68 75.5,391.59 76.5,392.50 77.5,393.42 78.5,394.35 79.5,395.28 80.5,396.22 81.5,397.17 82.5,398.12 83.5,399.08 84.5,400.05 85.5,401.02 86.5,402.00 87.5,402.99 88.5,403.98 89.5,404.98 90.5,405.98 91.5,406.99 92.5,408.00 93.5,409.02 94.5,410.05 95.5,411.08 96.5,412.11 97.5,413.15 98.5,414.19 99.5,415.24 100.5,416.30 101.5,417.35 102.5,418.41 103.5,419.48 104.5,420.55 105.5,421.62 106.5,422.70 107.5,423.78 108.5,424.86 109.5,425.95 110.5,427.04 111.5,428.13 112.5,429.22 113.5,430.32 114.5,431.42 115.5,432.52 116.5,433.63 117.5,434.73 118.5,435.84 119.5,436.95 120.5,438.06 121.5,439.18 122.5,440.29 123.5,441.41 124.5,442.52 125.5,443.64 126.5,444.76 127.5,445.88 128.5,447.00 129.5,448.12 130.5,449.24 131.5,450.36 132.5,451.48 133.5,452.60 134.5,453.72 135.5,454.84 136.5,455.96 137.5,457.08 138.5,458.19 139.5,459.31 140.5,460.42 141.5,461.54 142.5,462.65 143.5,463.76 144.5,464.87 145.5,465.97 146.5,467.08 147.5,468.18 148.5,469.28 149.5,470.38 150.5,471.47 151.5,472.56 152.5,473.65 153.5,474.74 154.5,475.82 155.5,476.90 156.5,477.98 157.5,479.05 158.5,480.12 159.5,481.19 160.5,482.25 161.5,483.30 162.5,484.36 163.5,485.41 164.5,486.45 165.5,487.49 166.5,488.52 167.5,489.55 168.5,490.58 169.5,491.60 170.5,492.61 171.5,493.62 172.5,494.62 173.5,495.62 174.5,496.61 175.5,497.60 176.5,498.58 177.5,499.55 178.5,500.52 179.5,501.48 180.5,502.43 181.5,503.38 182.5,504.32 183.5,505.25 184.5,506.18 185.5,507.10 186.5,508.01 187.5,508.92 188.5,509.81 189.5,510.70 190.5,511.59 191.5,512.46 192.5,513.33 193.5,514.19 194.5,515.04 195.5,515.88 196.5,516.71 197.5,517.54 198.5,518.35 199.5,519.16 200.5,519.96 201.5,520.75 202.5,521.53 203.5,522.30 204.5,523.06 205.5,523.82 206.5,524.56 207.5,525.30 208.5,526.02 209.5,526.74 210.5,527.44 211.5,528.14 212.5,528.82 213.5,529.50 214.5,530.17 215.5,530.82 216.5,531.47 217.5,532.10 218.5,532.73 219.5,533.34 220.5,533.94 221.5,534.54 222.5,535.12 223.5,535.69 224.5,536.25 225.5,536.80 226.5,537.34 227.5,537.86 228.5,538.38 229.5,538.88 230.5,539.38 231.5,539.86 232.5,540.33 233.5,540.79 234.5,541.24 235.5,541.67 236.5,542.10 237.5,542.51 238.5,542.91 239.5,543.30 240.5,543.68 241.5,544.04 242.5,544.40 243.5,544.74 244.5,545.07 245.5,545.38 246.5,545.69 247.5,545.98 248.5,546.26 249.5,546.53 250.5,546.79 251.5,547.03 252.5,547.26 253.5,547.48 254.5,547.69 255.5,547.88 256.5,548.07 257.5,548.24 258.5,548.39 259.5,548.54 260.5,548.67 261.5,548.79 262.5,548.90 263.5,548.99 264.5,549.07 265.5,549.14 266.5,549.20 267.5,549.24 268.5,549.27 269.5,549.29 270.5,549.30 271.5,549.29 272.5,549.27 273.5,549.24 274.5,549.20 275.5,549.14 276.5,549.07 277.5,548.99 278.5,548.90 279.5,548.79 280.5,548.67 281.5,548.54 282.5,548.39 283.5,548.24 284.5,548.07 285.5,547.88 286.5,547.69 287.5,547.48 288.5,547.26 289.5,547.03 290.5,546.79 291.5,546.53 292.5,546.26 293.5,545.98 294.5,545.69 295.5,545.38 296.5,545.07 297.5,544.74 298.5,544.40 299.5,544.04 300.5,543.68 301.5,543.30 302.5,542.91 303.5,542.51 304.5,542.10 305.5,541.67 306.5,541.24 307.5,540.79 308.5,540.33 309.5,539.86 310.5,539.38 311.5,538.88 312.5,538.38 313.5,537.86 314.5,537.34 315.5,536.80 316.5,536.25 317.5,535.69 318.5,535.12 319.5,534.54 320.5,533.94 321.5,533.34 322.5,532.73 323.5,532.10 324.5,531.47 325.5,530.82 326.5,530.17 327.5,529.50 328.5,528.82 329.5,528.14 330.5,527.44 331.5,526.74 332.5,526.02 333.5,525.30 334.5,524.56 335.5,523.82 336.5,523.06 337.5,522.30 338.5,521.53 339.5,520.75 340.5,519.96 341.5,519.16 342.5,518.35 343.5,517.54 344.5,516.71 345.5,515.88 346.5,515.04 347.5,514.19 348.5,513.33 349.5,512.46 350.5,511.59 351.5,510.70 352.5,509.81 353.5,508.92 354.5,508.01 355.5,507.10 356.5,506.18 357.5,505.25 358.5,504.32 359.5,503.38 360.5,502.43 361.5,501.48 362.5,500.52 363.5,499.55 364.5,498.58 365.5,497.60 366.5,496.61 367.5,495.62 368.5,494.62 369.5,493.62 370.5,492.61 371.5,491.60 372.5,490.58 373.5,489.55 374.5,488.52 375.5,487.49 376.5,486.45 377.5,485.41 378.5,484.36 379.5,483.30 380.5,482.25 381.5,481.19 382.5,480.12 383.5,479.05 384.5,477.98 385.5,476.90 386.5,475.82 387.5,474.74 388.5,473.65 389.5,472.56 390.5,471.47 391.5,470.38 392.5,469.28 393.5,468.18 394.5,467.08 395.5,465.97 396.5,464.87 397.5,463.76 398.5,462.65 399.5,461.54 400.5,460.42 401.5,459.31 402.5,458.19 403.5,457.08 404.5,455.96 405.5,454.84 406.5,453.72 407.5,452.60 408.5,451.48 409.5,450.36 410.5,449.24 411.5,448.12 412.5,447.00 413.5,445.88 414.5,444.76 415.5,443.64 416.5,442.52 417.5,441.41 418.5,440.29 419.5,439.18 420.5,438.06 421.5,436.95 422.5,435.84 423.5,434.73 424.5,433.63 425.5,432.52 426.5,431.42 427.5,430.32 428.5,429.22 429.5,428.13 430.5,427.04 431.5,425.95 432.5,424.86 433.5,423.78 434.5,422.70 435.5,421.62 436.5,420.55 437.5,419.48 438.5,418.41 439.5,417.35 440.5,416.30 441.5,415.24 442.5,414.19 443.5,413.15 444.5,412.11 445.5,411.08 446.5,410.05 447.5,409.02 448.5,408.00 449.5,406.99 450.5,405.98 451.5,404.98 452.5,403.98 453.5,402.99 454.5,402.00 455.5,401.02 456.5,400.05 457.5,399.08 458.5,398.12 459.5,397.17 460.5,396.22 461.5,395.28 462.5,394.35 463.5,393.42 464.5,392.50 465.5,391.59 466.5,390.68 467.5,389.79 468.5,388.90 469.5,388.01 470.5,387.14 471.5,386.27 472.5,385.41 473.5,384.56 474.5,383.72 475.5,382.89 476.5,382.06 477.5,381.25 478.5,380.44 479.5,379.64 480.5,378.85 481.5,378.07 482.5,377.30 483.5,376.54 484.5,375.78 485.5,375.04 486.5,374.30 487.5,373.58 488.5,372.86 489.5,372.16 490.5,371.46 491.5,370.78 492.5,370.10 493.5,369.43 494.5,368.78 495.5,368.13 496.5,367.50 497.5,366.87 498.5,366.26 499.5,365.66 500.5,365.06 501.5,364.48 502.5,363.91 503.5,363.35 504.5,362.80 505.5,362.26 506.5,361.74 507.5,361.22 508.5,360.72 509.5,360.22 510.5,359.74 511.5,359.27 512.5,358.81 513.5,358.36 514.5,357.93 515.5,357.50 516.5,357.09 517.5,356.69 518.5,356.30 519.5,355.92 520.5,355.56 521.5,355.20 522.5,354.86 523.5,354.53 524.5,354.22 525.5,353.91 526.5,353.62 527.5,353.34 528.5,353.07 529.5,352.81 530.5,352.57 531.5,352.34 532.5,352.12 533.5,351.91 534.5,351.72 535.5,351.53 536.5,351.36 537.5,351.21 538.5,351.06 539.5,350.93 540.5,350.81 541.5,350.70 542.5,350.61 543.5,350.53 544.5,350.46 545.5,350.40 546.5,350.36 547.5,350.33 548.5,350.31 549.5,350.30 550.5,350.31 551.5,350.33 552.5,350.36 553.5,350.40 554.5,350.46 555.5,350.53 556.5,350.61 557.5,350.70 558.5,350.81 559.5,350.93 560.5,351.06 561.5,351.21 562.5,351.36 563.5,351.53 564.5,351.72 565.5,351.91 566.5,352.12 567.5,352.34 568.5,352.57 569.5,352.81 570.5,353.07 571.5,353.34 572.5,353.62 573.5,353.91 574.5,354.22 575.5,354.53 576.5,354.86 577.5,355.20 578.5,355.56 579.5,355.92 580.5,356.30 581.5,356.69 582.5,357.09 583.5,357.50 584.5,357.93 585.5,358.36 586.5,358.81 587.5,359.27 588.5,359.74 589.5,360.22 590.5,360.72 591.5,361.22 592.5,361.74 593.5,362.26 594.5,362.80 595.5,363.35 596.5,363.91 597.5,364.48 598.5,365.06 599.5,365.66 600.5,366.26 601.5,366.87 602.5,367.50 603.5,368.13 604.5,368.78 605.5,369.43 606.5,370.10 607.5,370.78 608.5,371.46 609.5,372.16 610.5,372.86 611.5,373.58 612.5,374.30 613.5,375.04 614.5,375.78 615.5,376.54 616.5,377.30 617.5,378.07 618.5,378.85 619.5,379.64 620.5,380.44 621.5,381.25 622.5,382.06 623.5,382.89 624.5,383.72 625.5,384.56 626.5,385.41 627.5,386.27 628.5,387.14 629.5,388.01 630.5,388.90 631.5,389.79 632.5,390.68 633.5,391.59 634.5,392.50 635.5,393.42 636.5,394.35 637.5,395.28 638.5,396.22 639.5,397.17 640.5,398.12 641.5,399.08 642.5,400.05 643.5,401.02 644.5,402.00 645.5,402.99 646.5,403.98 647.5,404.98 648.5,405.98 649.5,406.99 650.5,408.00 651.5,409.02 652.5,410.05 653.5,411.08 654.5,412.11 655.5,413.15 656.5,414.19 657.5,415.24 658.5,416.30 659.5,417.35 660.5,418.41 661.5,419.48 662.5,420.55 663.5,421.62 664.5,422.70 665.5,423.78 666.5,424.86 667.5,425.95 668.5,427.04 669.5,428.13 670.5,429.22 671.5,430.32 672.5,431.42 673.5,432.52 674.5,433.63 675.5,434.73 676.5,435.84 677.5,436.95 678.5,438.06 679.5,439.18 680.5,440.29 681.5,441.41 682.5,442.52 683.5,443.64 684.5,444.76 685.5,445.88 686.5,447.00 687.5,448.12 688.5,449.24 689.5,450.36 690.5,451.48 691.5,452.60 692.5,453.72 693.5,454.84 694.5,455.96 695.5,457.08 696.5,458.19 697.5,459.31 698.5,460.42 699.5,461.54 700.5,462.65 701.5,463.76 702.5,464.87 703.5,465.97 704.5,467.08 705.5,468.18 706.5,469.28 707.5,470.38 708.5,471.47 709.5,472.56 710.5,473.65 711.5,474.74 712.5,475.82 713.5,476.90 714.5,477.98 715.5,479.05 716.5,480.12 717.5,481.19 718.5,482.25 719.5,483.30 720.5,484.36 721.5,485.41 722.5,486.45 723.5,487.49 724.5,488.52 725.5,489.55 726.5,490.58 727.5,491.60 728.5,492.61 729.5,493.62 730.5,494.62 731.5,495.62 732.5,496.61 733.5,497.60 734.5,498.58 735.5,499.55 736.5,500.52 737.5,501.48 738.5,502.43 739.5,503.38 740.5,504.32 741.5,505.25 742.5,506.18 743.5,507.10 744.5,508.01 745.5,508.92 746.5,509.81 747.5,510.70 748.5,511.59 749.5,512.46 750.5,513.33 751.5,514.19 752.5,515.04 753.5,515.88 754.5,516.71 755.5,517.54 756.5,518.35 757.5,519.16 758.5,519.96 759.5,520.75 760.5,521.53 761.5,522.30 762.5,523.06 763.5,523.82 764.5,524.56 765.5,525.30 766.5,526.02 767.5,526.74 768.5,527.44 769.5,528.14 770.5,528.82 771.5,529.50 772.5,530.17 773.5,530.82 774.5,531.47 775.5,532.10 776.5,532.73 777.5,533.34 778.5,533.94 779.5,534.54 780.5,535.12 781.5,535.69 782.5,536.25 783.5,536.80 784.5,537.34 785.5,537.86 786.5,538.38 787.5,538.88 788.5,539.38 789.5,539.86 790.5,540.33 791.5,540.79 792.5,541.24 793.5,541.67 794.5,542.10 795.5,542.51 796.5,542.91 797.5,543.30 798.5,543.68 799.5,544.04 800.5,544.40 801.5,544.74 802.5,545.07 803.5,545.38 804.5,545.69 805.5,545.98 806.5,546.26 807.5,546.53 808.5,546.79 809.5,547.03 810.5,547.26 811.5,547.48 812.5,547.69 813.5,547.88 814.5,548.07 815.5,548.24 816.5,548.39 817.5,548.54 818.5,548.67 819.5,548.79 820.5,548.90 821.5,548.99 822.5,549.07 823.5,549.14 824.5,549.20 825.5,549.24 826.5,549.27 827.5,549.29 828.5,549.30 829.5,549.29 830.5,549.27 831.5,549.24 832.5,549.20 833.5,549.14 834.5,549.07 835.5,548.99 836.5,548.90 837.5,548.79 838.5,548.67 839.5,548.54 840.5,548.39 841.5,548.24 842.5,548.07 843.5,547.88 844.5,547.69 845.5,547.48 846.5,547.26 847.5,547.03 848.5,546.79 849.5,546.53 850.5,546.26 851.5,545.98 852.5,545.69 853.5,545.38 854.5,545.07 855.5,544.74 856.5,544.40 857.5,544.04 858.5,543.68 859.5,543.30 860.5,542.91 861.5,542.51 862.5,542.10 863.5,541.67 864.5,541.24 865.5,540.79 866.5,540.33 867.5,539.86 868.5,539.38 869.5,538.88 870.5,538.38 871.5,537.86 872.5,537.34 873.5,536.80 874.5,536.25 875.5,535.69 876.5,535.12 877.5,534.54 878.5,533.94 879.5,533.34 880.5,532.73 881.5,532.10 882.5,531.47 883.5,530.82 884.5,530.17 885.5,529.50 886.5,528.82 887.5,528.14 888.5,527.44 889.5,526.74 890.5,526.02 891.5,525.30 892.5,524.56 893.5,523.82 894.5,523.06 895.5,522.30 896.5,521.53 897.5,520.75 898.5,519.96 899.5,519.16 900.5,518.35 901.5,517.54 902.5,516.71 903.5,515.88 904.5,515.04 905.5,514.19 906.5,513.33 907.5,512.46 908.5,511.59 909.5,510.70 910.5,509.81 911.5,508.92 912.5,508.01 913.5,507.10 914.5,506.18 915.5,505.25 916.5,504.32 917.5,503.38 918.5,502.43 919.5,501.48 920.5,500.52 921.5,499.55 922.5,498.58 923.5,497.60 924.5,496.61 925.5,495.62 926.5,494.62 927.5,493.62 928.5,492.61 929.5,491.60 930.5,490.58 931.5,489.55 932.5,488.52 933.5,487.49 934.5,486.45 935.5,485.41 936.5,484.36 937.5,483.30 938.5,482.25 939.5,481.19 940.5,480.12 941.5,479.05 942.5,477.98 943.5,476.90 944.5,475.82 945.5,474.74 946.5,473.65 947.5,472.56 948.5,471.47 949.5,470.38 950.5,469.28 951.5,468.18 952.5,467.08 953.5,465.97 954.5,464.87 955.5,463.76 956.5,462.65 957.5,461.54 958.5,460.42 959.5,459.31 960.5,458.19 961.5,457.08 962.5,455.96 963.5,454.84 964.5,453.72 965.5,452.60 966.5,451.48 967.5,450.36 968.5,449.24 969.5,448.12 970.5,447.00 971.5,445.88 972.5,444.76 973.5,443.64 974.5,442.52 975.5,441.41 976.5,440.29 977.5,439.18 978.5,438.06 979.5,436.95 980.5,435.84 981.5,434.73 982.5,433.63 983.5,432.52 984.5,431.42 985.5,430.32 986.5,429.22 987.5,428.13 988.5,427.04 989.5,425.95 990.5,424.86 991.5,423.78 992.5,422.70 993.5,421.62 994.5,420.55 995.5,419.48 996.5,418.41 997.5,417.35 998.5,416.30 999.5,415.24 1000.5,414.19 1001.5,413.15 1002.5,412.11 1003.5,411.08 1004.5,410.05 1005.5,409.02 1006.5,408.00 1007.5,406.99 1008.5,405.98 1009.5,404.98 1010.5,403.98 1011.5,402.99 1012.5,402.00 1013.5,401.02 1014.5,400.05 1015.5,399.08 1016.5,398.12 1017.5,397.17 1018.5,396.22 1019.5,395.28 1020.5,394.35 1021.5,393.42 1022.5,392.50 1023.5,391.59 1024.5,390.68 1025.5,389.79 1026.5,388.90 1027.5,388.01 1028.5,387.14 1029.5,386.27 1030.5,385.41 1031.5,384.56 1032.5,383.72 1033.5,382.89 1034.5,382.06 1035.5,381.25 1036.5,380.44 1037.5,379.64 1038.5,378.85 1039.5,378.07 1040.5,377.30 1041.5,376.54 1042.5,375.78 1043.5,375.04 1044.5,374.30 1045.5,373.58 1046.5,372.86 1047.5,372.16 1048.5,371.46 1049.5,370.78 1050.5,370.10 1051.5,369.43 1052.5,368.78 1053.5,368.13 1054.5,367.50 1055.5,366.87 1056.5,366.26 1057.5,365.66 1058.5,365.06 1059.5,364.48 1060.5,363.91 1061.5,363.35 1062.5,362.80 1063.5,362.26 1064.5,361.74 1065.5,361.22 1066.5,360.72 1067.5,360.22 1068.5,359.74 1069.5,359.27 1070.5,358.81 1071.5,358.36 1072.5,357.93 1073.5,357.50 1074.5,357.09 1075.5,356.69 1076.5,356.30 1077.5,355.92 1078.5,355.56 1079.5,355.20 1080.5,354.86 1081.5,354.53 1082.5,354.22 1083.5,353.91 1084.5,353.62 1085.5,353.34 1086.5,353.07 1087.5,352.81 1088.5,352.57 1089.5,352.34 1090.5,352.12 1091.5,351.91 1092.5,351.72 1093.5,351.53 1094.5,351.36 1095.5,351.21 1096.5,351.06 1097.5,350.93 1098.5,350.81 1099.5,350.70 1100.5,350.61 1101.5,350.53 1102.5,350.46 1103.5,350.40 1104.5,350.36 1105.5,350.33 1106.5,350.31 1107.5,350.30 1108.5,350.31 1109.5,350.33 1110.5,350.36 1111.5,350.40 1112.5,350.46 1113.5,350.53 1114.5,350.61 1115.0,350.65" fill="none" stroke="#00f0f0" stroke-width="3.1" stroke-linejoin="round"/>
</g>
<rect x="13.00" y="608.50" width="1092.00" height="28.30" fill="#222422" />
<line x1="112.00" y1="608.50" x2="112.00" y2="636.80" stroke="#333533" stroke-width="1.5" />
<line x1="224.00" y1="608.50" x2="224.00" y2="636.80" stroke="#333533" stroke-width="1.5" />
<line x1="335.00" y1="608.50" x2="335.00" y2="636.80" stroke="#333533" stroke-width="1.5" />
<line x1="447.00" y1="608.50" x2="447.00" y2="636.80" stroke="#333533" stroke-width="1.5" />
<line x1="558.00" y1="608.50" x2="558.00" y2="636.80" stroke="#333533" stroke-width="1.5" />
<line x1="670.00" y1="608.50" x2="670.00" y2="636.80" stroke="#333533" stroke-width="1.5" />
<line x1="781.00" y1="608.50" x2="781.00" y2="636.80" stroke="#333533" stroke-width="1.5" />
<line x1="893.00" y1="608.50" x2="893.00" y2="636.80" stroke="#333533" stroke-width="1.5" />
<line x1="1004.00" y1="608.50" x2="1004.00" y2="636.80" stroke="#333533" stroke-width="1.5" />
<line x1="555.00" y1="609.80" x2="561.50" y2="609.80" stroke="#333533" stroke-width="1.6" />
<line x1="555.00" y1="619.66" x2="561.50" y2="619.66" stroke="#333533" stroke-width="1.6" />
<line x1="555.00" y1="629.53" x2="561.50" y2="629.53" stroke="#333533" stroke-width="1.6" />
<line x1="555.00" y1="639.40" x2="561.50" y2="639.40" stroke="#333533" stroke-width="1.6" />
<text transform="translate(20.86,630.80) scale(0.8101,1)" x="0" y="0" font-family="Liberation Sans" font-size="16.42" font-weight="bold" fill="#a0a0a0" style="font-kerning:none" textLength="10.03" lengthAdjust="spacing">F</text>
<text x="35.36" y="632.50" font-family="Liberation Sans" font-size="29.80" font-weight="normal" fill="#f4f000" style="font-kerning:none" textLength="23.98" lengthAdjust="spacingAndGlyphs">10</text>
<text transform="translate(65.56,630.80) scale(0.8597,1)" x="0" y="0" font-family="Liberation Sans" font-size="16.42" font-weight="bold" fill="#a0a0a0" style="font-kerning:none" textLength="31.94" lengthAdjust="spacing">KHz</text>
<text transform="translate(211.89,630.80) scale(0.9500,1)" x="0" y="0" font-family="Liberation Sans" font-size="16.42" font-weight="bold" fill="#a0a0a0" style="font-kerning:none" textLength="33.83" lengthAdjust="spacing">VPP</text>
<text x="249.26" y="632.50" font-family="Liberation Sans" font-size="29.80" font-weight="normal" fill="#f4f000" style="font-kerning:none" textLength="47.49" lengthAdjust="spacingAndGlyphs">866</text>
<text transform="translate(299.97,630.80) scale(0.9500,1)" x="0" y="0" font-family="Liberation Sans" font-size="16.42" font-weight="bold" fill="#a0a0a0" style="font-kerning:none" textLength="25.93" lengthAdjust="spacing">mV</text>
<text transform="translate(401.61,630.80) scale(0.9500,1)" x="0" y="0" font-family="Liberation Sans" font-size="16.42" font-weight="bold" fill="#a0a0a0" style="font-kerning:none" textLength="36.16" lengthAdjust="spacing">AVG</text>
<rect x="441.00" y="621.70" width="10.00" height="2.20" fill="#f4f000" />
<rect x="444.90" y="617.80" width="2.20" height="10.00" fill="#f4f000" />
<text x="453.44" y="632.50" font-family="Liberation Sans" font-size="29.80" font-weight="normal" fill="#f4f000" style="font-kerning:none" textLength="47.78" lengthAdjust="spacingAndGlyphs">4.54</text>
<text transform="translate(506.48,630.80) scale(0.9440,1)" x="0" y="0" font-family="Liberation Sans" font-size="16.42" font-weight="bold" fill="#a0a0a0" style="font-kerning:none" textLength="25.56" lengthAdjust="spacing">mV</text>
<text transform="translate(591.47,630.80) scale(0.9350,1)" x="0" y="0" font-family="Liberation Sans" font-size="16.42" font-weight="bold" fill="#a0a0a0" style="font-kerning:none" textLength="36.50" lengthAdjust="spacing">RMS</text>
<text x="631.98" y="632.50" font-family="Liberation Sans" font-size="29.80" font-weight="normal" fill="#f4f000" style="font-kerning:none" textLength="44.70" lengthAdjust="spacingAndGlyphs">303</text>
<text transform="translate(680.98,630.80) scale(0.9440,1)" x="0" y="0" font-family="Liberation Sans" font-size="16.42" font-weight="bold" fill="#a0a0a0" style="font-kerning:none" textLength="25.56" lengthAdjust="spacing">mV</text>
<text transform="translate(782.39,630.80) scale(0.9500,1)" x="0" y="0" font-family="Liberation Sans" font-size="16.42" font-weight="bold" fill="#a0a0a0" style="font-kerning:none" textLength="22.78" lengthAdjust="spacing">VP</text>
<rect x="810.00" y="621.70" width="10.00" height="2.20" fill="#f4f000" />
<rect x="813.90" y="617.80" width="2.20" height="10.00" fill="#f4f000" />
<text x="822.42" y="632.50" font-family="Liberation Sans" font-size="29.80" font-weight="normal" fill="#f4f000" style="font-kerning:none" textLength="42.18" lengthAdjust="spacingAndGlyphs">438</text>
<text transform="translate(869.98,630.80) scale(0.9440,1)" x="0" y="0" font-family="Liberation Sans" font-size="16.42" font-weight="bold" fill="#a0a0a0" style="font-kerning:none" textLength="25.56" lengthAdjust="spacing">mV</text>
<text transform="translate(971.46,630.80) scale(0.9500,1)" x="0" y="0" font-family="Liberation Sans" font-size="16.42" font-weight="bold" fill="#a0a0a0" style="font-kerning:none" textLength="32.21" lengthAdjust="spacing">MIN</text>
<rect x="1006.50" y="621.00" width="8.50" height="2.00" fill="#f4f000" />
<text x="1017.42" y="632.50" font-family="Liberation Sans" font-size="29.80" font-weight="normal" fill="#f4f000" style="font-kerning:none" textLength="42.18" lengthAdjust="spacingAndGlyphs">428</text>
<text transform="translate(1064.47,630.80) scale(0.9500,1)" x="0" y="0" font-family="Liberation Sans" font-size="16.42" font-weight="bold" fill="#a0a0a0" style="font-kerning:none" textLength="26.46" lengthAdjust="spacing">mV</text>
<polygon points="550.2,57 566,57 566,68.8 558.2,76.5 550.2,68.8" fill="#10f010"/>
<rect x="554.50" y="60.00" width="1.80" height="8.50" fill="#000" />
<rect x="559.20" y="60.00" width="1.80" height="8.50" fill="#000" />
<rect x="554.50" y="63.60" width="6.50" height="1.60" fill="#000" />
<polygon points="927,255 946,255 946,269 936.5,278 927,269" fill="#10f010"/>
<rect x="932.50" y="257.50" width="2.10" height="11.30" fill="#000" />
<rect x="938.40" y="257.50" width="2.10" height="11.30" fill="#000" />
<rect x="932.50" y="263.20" width="8.00" height="1.80" fill="#000" />
<polygon points="1099,155.5 1106,148 1115.5,148 1115.5,163.5 1106,163.5" fill="#9412f0"/>
<rect x="1106.00" y="151.50" width="7.00" height="1.80" fill="#000" />
<rect x="1108.40" y="151.50" width="2.20" height="9.50" fill="#000" />
<polygon points="1093.3,452.5 1101.5,444 1116,444 1116,461.8 1101.5,461.8" fill="#9412f0"/>
<rect x="1105.00" y="447.80" width="7.20" height="1.80" fill="#000" />
<rect x="1107.90" y="447.80" width="2.20" height="11.00" fill="#000" />
<polygon points="1,147.8 10.5,147.8 17.6,155.8 10.5,163.6 1,163.6" fill="#00f0f0"/>
<path d="M4.60,151.15 H8.60 Q9.55,151.15 9.55,152.10 V153.29 L4.65,158.55 V159.15 H10.20" fill="none" stroke="#000" stroke-width="1.3"/>
<polygon points="1,443.5 15,443.5 24,452.5 15,462 1,462" fill="#fcf400"/>
<polygon points="1,442.5 15,442.5 24,451.5 15,461 1,461" fill="#00f0f0"/>
<path d="M5.60,447.25 H11.40 Q12.25,447.25 12.25,448.10 V449.95 L5.75,456.65 V457.25 H13.00" fill="none" stroke="#000" stroke-width="1.5"/>
<rect x="0.00" y="653.00" width="152.80" height="52.00" fill="#222222" />
<rect x="0.00" y="653.00" width="47.50" height="22.00" fill="#fcf400" />
<rect x="156.70" y="653.00" width="152.80" height="52.00" fill="#222222" />
<rect x="156.70" y="653.00" width="47.50" height="22.00" fill="#00f0f0" />
<rect x="314.25" y="653.00" width="152.80" height="52.00" fill="#222222" />
<rect x="314.25" y="653.00" width="47.50" height="22.00" fill="#3a8ef6" />
<rect x="471.70" y="653.00" width="152.80" height="52.00" fill="#222222" />
<rect x="471.70" y="653.00" width="47.50" height="22.00" fill="#ff8a30" />
<rect x="629.00" y="653.00" width="152.80" height="52.00" fill="#222222" />
<rect x="629.00" y="653.00" width="47.50" height="22.00" fill="#a445f5" />
<rect x="786.25" y="653.00" width="152.80" height="52.00" fill="#222222" />
<rect x="786.25" y="653.00" width="47.50" height="22.00" fill="#f0308a" />
<rect x="943.70" y="653.00" width="152.80" height="52.00" fill="#222222" />
<rect x="943.70" y="653.00" width="47.50" height="22.00" fill="#34f28e" />
<text transform="translate(7.79,669.80) scale(0.8411,1)" x="0" y="0" font-family="Liberation Sans" font-size="16.72" font-weight="normal" fill="#000" stroke="#000" stroke-width="0.35" style="font-kerning:none" textLength="28.79" lengthAdjust="spacing">CHI</text>
<text transform="translate(73.32,670.80) scale(0.8760,1)" x="0" y="0" font-family="Liberation Sans" font-size="16.72" font-weight="bold" fill="#000" style="font-kerning:none" textLength="27.85" lengthAdjust="spacing">BW</text>
<text transform="translate(72.32,669.80) scale(0.8760,1)" x="0" y="0" font-family="Liberation Sans" font-size="16.72" font-weight="bold" fill="#d0d0d0" style="font-kerning:none" textLength="27.85" lengthAdjust="spacing">BW</text>
<text transform="translate(107.18,670.80) scale(1.0000,1)" x="0" y="0" font-family="Liberation Sans" font-size="16.72" font-weight="bold" fill="#000" style="font-kerning:none" textLength="40.24" lengthAdjust="spacing">I50M</text>
<text transform="translate(106.18,669.80) scale(1.0000,1)" x="0" y="0" font-family="Liberation Sans" font-size="16.72" font-weight="bold" fill="#d0d0d0" style="font-kerning:none" textLength="40.24" lengthAdjust="spacing">I50M</text>
<text transform="translate(7.82,698.00) scale(1.0000,1)" x="0" y="0" font-family="Liberation Sans" font-size="17.44" font-weight="normal" fill="#000" stroke="#000" stroke-width="0.55" style="font-kerning:none" textLength="56.75" lengthAdjust="spacing">200mV</text>
<text transform="translate(6.82,697.00) scale(1.0000,1)" x="0" y="0" font-family="Liberation Sans" font-size="17.44" font-weight="normal" fill="#d0d0d0" stroke="#d0d0d0" stroke-width="0.55" style="font-kerning:none" textLength="56.75" lengthAdjust="spacing">200mV</text>
<text transform="translate(80.55,698.00) scale(0.8053,1)" x="0" y="0" font-family="Liberation Sans" font-size="17.44" font-weight="normal" fill="#000" stroke="#000" stroke-width="0.55" style="font-kerning:none" textLength="25.19" lengthAdjust="spacing">DC</text>
<text transform="translate(79.55,697.00) scale(0.8053,1)" x="0" y="0" font-family="Liberation Sans" font-size="17.44" font-weight="normal" fill="#d0d0d0" stroke="#d0d0d0" stroke-width="0.55" style="font-kerning:none" textLength="25.19" lengthAdjust="spacing">DC</text>
<text transform="translate(129.39,698.00) scale(1.0000,1)" x="0" y="0" font-family="Liberation Sans" font-size="17.44" font-weight="normal" fill="#000" stroke="#000" stroke-width="0.55" style="font-kerning:none" textLength="17.28" lengthAdjust="spacing">IX</text>
<text transform="translate(128.39,697.00) scale(1.0000,1)" x="0" y="0" font-family="Liberation Sans" font-size="17.44" font-weight="normal" fill="#d0d0d0" stroke="#d0d0d0" stroke-width="0.55" style="font-kerning:none" textLength="17.28" lengthAdjust="spacing">IX</text>
<text transform="translate(164.75,669.80) scale(0.8800,1)" x="0" y="0" font-family="Liberation Sans" font-size="16.72" font-weight="normal" fill="#000" stroke="#000" stroke-width="0.35" style="font-kerning:none" textLength="34.08" lengthAdjust="spacing">CH2</text>
<text transform="translate(230.72,670.80) scale(0.8722,1)" x="0" y="0" font-family="Liberation Sans" font-size="16.72" font-weight="bold" fill="#000" style="font-kerning:none" textLength="27.85" lengthAdjust="spacing">BW</text>
<text transform="translate(229.72,669.80) scale(0.8722,1)" x="0" y="0" font-family="Liberation Sans" font-size="16.72" font-weight="bold" fill="#d0d0d0" style="font-kerning:none" textLength="27.85" lengthAdjust="spacing">BW</text>
<text transform="translate(264.58,670.80) scale(1.0000,1)" x="0" y="0" font-family="Liberation Sans" font-size="16.72" font-weight="bold" fill="#000" style="font-kerning:none" textLength="39.54" lengthAdjust="spacing">I50M</text>
<text transform="translate(263.58,669.80) scale(1.0000,1)" x="0" y="0" font-family="Liberation Sans" font-size="16.72" font-weight="bold" fill="#d0d0d0" style="font-kerning:none" textLength="39.54" lengthAdjust="spacing">I50M</text>
<text transform="translate(164.82,698.00) scale(1.0000,1)" x="0" y="0" font-family="Liberation Sans" font-size="17.44" font-weight="normal" fill="#000" stroke="#000" stroke-width="0.55" style="font-kerning:none" textLength="56.95" lengthAdjust="spacing">200mV</text>
<text transform="translate(163.82,697.00) scale(1.0000,1)" x="0" y="0" font-family="Liberation Sans" font-size="17.44" font-weight="normal" fill="#d0d0d0" stroke="#d0d0d0" stroke-width="0.55" style="font-kerning:none" textLength="56.95" lengthAdjust="spacing">200mV</text>
<text transform="translate(237.10,698.00) scale(0.8399,1)" x="0" y="0" font-family="Liberation Sans" font-size="17.44" font-weight="normal" fill="#000" stroke="#000" stroke-width="0.55" style="font-kerning:none" textLength="25.19" lengthAdjust="spacing">DC</text>
<text transform="translate(236.10,697.00) scale(0.8399,1)" x="0" y="0" font-family="Liberation Sans" font-size="17.44" font-weight="normal" fill="#d0d0d0" stroke="#d0d0d0" stroke-width="0.55" style="font-kerning:none" textLength="25.19" lengthAdjust="spacing">DC</text>
<text transform="translate(286.69,698.00) scale(1.0000,1)" x="0" y="0" font-family="Liberation Sans" font-size="17.44" font-weight="normal" fill="#000" stroke="#000" stroke-width="0.55" style="font-kerning:none" textLength="16.68" lengthAdjust="spacing">IX</text>
<text transform="translate(285.69,697.00) scale(1.0000,1)" x="0" y="0" font-family="Liberation Sans" font-size="17.44" font-weight="normal" fill="#d0d0d0" stroke="#d0d0d0" stroke-width="0.55" style="font-kerning:none" textLength="16.68" lengthAdjust="spacing">IX</text>
<text transform="translate(321.32,669.80) scale(0.8572,1)" x="0" y="0" font-family="Liberation Sans" font-size="16.72" font-weight="normal" fill="#000" stroke="#000" stroke-width="0.35" style="font-kerning:none" textLength="37.14" lengthAdjust="spacing">HOR</text>
<text transform="translate(322.30,698.00) scale(1.0000,1)" x="0" y="0" font-family="Liberation Sans" font-size="17.44" font-weight="normal" fill="#000" stroke="#000" stroke-width="0.55" style="font-kerning:none" textLength="42.50" lengthAdjust="spacing">50uS</text>
<text transform="translate(321.30,697.00) scale(1.0000,1)" x="0" y="0" font-family="Liberation Sans" font-size="17.44" font-weight="normal" fill="#d0d0d0" stroke="#d0d0d0" stroke-width="0.55" style="font-kerning:none" textLength="42.50" lengthAdjust="spacing">50uS</text>
<text transform="translate(418.62,698.00) scale(1.0000,1)" x="0" y="0" font-family="Liberation Sans" font-size="17.44" font-weight="normal" fill="#000" stroke="#000" stroke-width="0.55" style="font-kerning:none" textLength="43.18" lengthAdjust="spacing">20uS</text>
<text transform="translate(417.62,697.00) scale(1.0000,1)" x="0" y="0" font-family="Liberation Sans" font-size="17.44" font-weight="normal" fill="#d0d0d0" stroke="#d0d0d0" stroke-width="0.55" style="font-kerning:none" textLength="43.18" lengthAdjust="spacing">20uS</text>
<text transform="translate(479.97,669.80) scale(0.8336,1)" x="0" y="0" font-family="Liberation Sans" font-size="16.72" font-weight="normal" fill="#000" stroke="#000" stroke-width="0.35" style="font-kerning:none" textLength="36.22" lengthAdjust="spacing">ACQ</text>
<text transform="translate(586.38,670.80) scale(1.0000,1)" x="0" y="0" font-family="Liberation Sans" font-size="16.72" font-weight="bold" fill="#000" style="font-kerning:none" textLength="33.15" lengthAdjust="spacing">Run</text>
<text transform="translate(585.38,669.80) scale(1.0000,1)" x="0" y="0" font-family="Liberation Sans" font-size="16.72" font-weight="bold" fill="#d0d0d0" style="font-kerning:none" textLength="33.15" lengthAdjust="spacing">Run</text>
<text transform="translate(478.89,698.00) scale(1.0000,1)" x="0" y="0" font-family="Liberation Sans" font-size="17.44" font-weight="normal" fill="#000" stroke="#000" stroke-width="0.55" style="font-kerning:none" textLength="70.24" lengthAdjust="spacing">I00MS/s</text>
<text transform="translate(477.89,697.00) scale(1.0000,1)" x="0" y="0" font-family="Liberation Sans" font-size="17.44" font-weight="normal" fill="#d0d0d0" stroke="#d0d0d0" stroke-width="0.55" style="font-kerning:none" textLength="70.24" lengthAdjust="spacing">I00MS/s</text>
<text transform="translate(581.24,698.00) scale(1.0000,1)" x="0" y="0" font-family="Liberation Sans" font-size="17.44" font-weight="normal" fill="#000" stroke="#000" stroke-width="0.55" style="font-kerning:none" textLength="37.39" lengthAdjust="spacing">8bit</text>
<text transform="translate(580.24,697.00) scale(1.0000,1)" x="0" y="0" font-family="Liberation Sans" font-size="17.44" font-weight="normal" fill="#d0d0d0" stroke="#d0d0d0" stroke-width="0.55" style="font-kerning:none" textLength="37.39" lengthAdjust="spacing">8bit</text>
<text transform="translate(637.67,669.80) scale(0.8797,1)" x="0" y="0" font-family="Liberation Sans" font-size="16.72" font-weight="normal" fill="#000" stroke="#000" stroke-width="0.35" style="font-kerning:none" textLength="26.93" lengthAdjust="spacing">TRI</text>
<text transform="translate(751.40,670.80) scale(0.8709,1)" x="0" y="0" font-family="Liberation Sans" font-size="16.72" font-weight="bold" fill="#000" style="font-kerning:none" textLength="28.79" lengthAdjust="spacing">CHI</text>
<text transform="translate(750.40,669.80) scale(0.8709,1)" x="0" y="0" font-family="Liberation Sans" font-size="16.72" font-weight="bold" fill="#fcf400" style="font-kerning:none" textLength="28.79" lengthAdjust="spacing">CHI</text>
<text transform="translate(637.47,698.00) scale(1.0000,1)" x="0" y="0" font-family="Liberation Sans" font-size="17.44" font-weight="normal" fill="#000" stroke="#000" stroke-width="0.55" style="font-kerning:none" textLength="42.77" lengthAdjust="spacing">Auto</text>
<text transform="translate(636.47,697.00) scale(1.0000,1)" x="0" y="0" font-family="Liberation Sans" font-size="17.44" font-weight="normal" fill="#d0d0d0" stroke="#d0d0d0" stroke-width="0.55" style="font-kerning:none" textLength="42.77" lengthAdjust="spacing">Auto</text>
<path d="M710.5,697 H715.5 V684.5 H721" fill="none" stroke="#d0d0d0" stroke-width="1.6"/>
<path d="M711,692 L715.5,687.5 L720,692" fill="none" stroke="#d0d0d0" stroke-width="1.6"/>
<text transform="translate(794.28,669.80) scale(0.8525,1)" x="0" y="0" font-family="Liberation Sans" font-size="16.72" font-weight="normal" fill="#000" stroke="#000" stroke-width="0.35" style="font-kerning:none" textLength="36.22" lengthAdjust="spacing">GEN</text>
<text transform="translate(911.09,670.80) scale(0.8577,1)" x="0" y="0" font-family="Liberation Sans" font-size="16.72" font-weight="bold" fill="#000" style="font-kerning:none" textLength="26.00" lengthAdjust="spacing">Sin</text>
<text transform="translate(910.09,669.80) scale(0.8577,1)" x="0" y="0" font-family="Liberation Sans" font-size="16.72" font-weight="bold" fill="#5050ff" style="font-kerning:none" textLength="26.00" lengthAdjust="spacing">Sin</text>
<text transform="translate(792.89,698.00) scale(1.0000,1)" x="0" y="0" font-family="Liberation Sans" font-size="17.44" font-weight="normal" fill="#000" stroke="#000" stroke-width="0.55" style="font-kerning:none" textLength="18.69" lengthAdjust="spacing">IV</text>
<text transform="translate(791.89,697.00) scale(1.0000,1)" x="0" y="0" font-family="Liberation Sans" font-size="17.44" font-weight="normal" fill="#d0d0d0" stroke="#d0d0d0" stroke-width="0.55" style="font-kerning:none" textLength="18.69" lengthAdjust="spacing">IV</text>
<text transform="translate(863.89,698.00) scale(1.0000,1)" x="0" y="0" font-family="Liberation Sans" font-size="17.44" font-weight="normal" fill="#000" stroke="#000" stroke-width="0.55" style="font-kerning:none" textLength="47.98" lengthAdjust="spacing">I0KHz</text>
<text transform="translate(862.89,697.00) scale(1.0000,1)" x="0" y="0" font-family="Liberation Sans" font-size="17.44" font-weight="normal" fill="#d0d0d0" stroke="#d0d0d0" stroke-width="0.55" style="font-kerning:none" textLength="47.98" lengthAdjust="spacing">I0KHz</text>
<text transform="translate(950.79,669.80) scale(0.8800,1)" x="0" y="0" font-family="Liberation Sans" font-size="16.72" font-weight="normal" fill="#000" stroke="#000" stroke-width="0.35" style="font-kerning:none" textLength="39.51" lengthAdjust="spacing">MOV</text>
<text transform="translate(951.81,698.00) scale(1.0000,1)" x="0" y="0" font-family="Liberation Sans" font-size="17.44" font-weight="normal" fill="#000" stroke="#000" stroke-width="0.55" style="font-kerning:none" textLength="38.75" lengthAdjust="spacing">Slow</text>
<text transform="translate(950.81,697.00) scale(1.0000,1)" x="0" y="0" font-family="Liberation Sans" font-size="17.44" font-weight="normal" fill="#d0d0d0" stroke="#d0d0d0" stroke-width="0.55" style="font-kerning:none" textLength="38.75" lengthAdjust="spacing">Slow</text>
<text transform="translate(1000.54,698.00) scale(1.0000,1)" x="0" y="0" font-family="Liberation Sans" font-size="17.44" font-weight="normal" fill="#000" stroke="#000" stroke-width="0.55" style="font-kerning:none" textLength="47.83" lengthAdjust="spacing">move</text>
<text transform="translate(999.54,697.00) scale(1.0000,1)" x="0" y="0" font-family="Liberation Sans" font-size="17.44" font-weight="normal" fill="#d0d0d0" stroke="#d0d0d0" stroke-width="0.55" style="font-kerning:none" textLength="47.83" lengthAdjust="spacing">move</text>
<rect x="1102" y="666.3" width="14.3" height="28.2" fill="#000" stroke="#d0d0d0" stroke-width="1.5"/>
<rect x="1106.00" y="663.00" width="6.30" height="3.00" fill="#d0d0d0" />
<rect x="1103.50" y="687.00" width="11.50" height="5.60" fill="#1e8cff" />
<defs><filter id="sh" x="-20%" y="-20%" width="150%" height="150%"><feMorphology in="SourceAlpha" operator="dilate" radius="0.7" result="d"/><feOffset in="d" dx="0.7" dy="0.7" result="o"/><feFlood flood-color="#000"/><feComposite in2="o" operator="in" result="s"/><feMerge><feMergeNode in="s"/><feMergeNode in="SourceGraphic"/></feMerge></filter></defs>
<g filter="url(#sh)" fill="#fff">
<rect x="57.75" y="1.70" width="5.2" height="6" rx="0.8" transform="rotate(0 60.35 13.2)"/><rect x="57.75" y="1.70" width="5.2" height="6" rx="0.8" transform="rotate(45 60.35 13.2)"/><rect x="57.75" y="1.70" width="5.2" height="6" rx="0.8" transform="rotate(90 60.35 13.2)"/><rect x="57.75" y="1.70" width="5.2" height="6" rx="0.8" transform="rotate(135 60.35 13.2)"/><rect x="57.75" y="1.70" width="5.2" height="6" rx="0.8" transform="rotate(180 60.35 13.2)"/><rect x="57.75" y="1.70" width="5.2" height="6" rx="0.8" transform="rotate(225 60.35 13.2)"/><rect x="57.75" y="1.70" width="5.2" height="6" rx="0.8" transform="rotate(270 60.35 13.2)"/><rect x="57.75" y="1.70" width="5.2" height="6" rx="0.8" transform="rotate(315 60.35 13.2)"/>
<circle cx="60.35" cy="13.2" r="9.2"/>
</g>
<circle cx="60.35" cy="13.2" r="4.7" fill="#000"/>
<circle cx="60.35" cy="13.2" r="3.4" fill="#212121"/>
<g filter="url(#sh)" fill="#fff">
<rect x="174.5" y="4.2" width="20.8" height="13" rx="2" fill="none" stroke="#fff" stroke-width="2.5"/>
<rect x="178.1" y="10.1" width="13.7" height="2.8" rx="1"/>
<rect x="183" y="18" width="4" height="3"/>
<rect x="179.5" y="20.5" width="11" height="2.5" rx="0.8"/>
<rect x="298" y="4.2" width="3" height="5.5"/>
<rect x="318.2" y="4.2" width="3" height="5.5"/>
<rect x="302.5" y="5.6" width="14" height="2.9" rx="1.4"/>
<rect x="298" y="15.1" width="23" height="8.7"/>
</g>
<rect x="300.20" y="17" width="1.3" height="4.5" fill="#000"/>
<rect x="304.40" y="17" width="1.3" height="2.2" fill="#000"/>
<rect x="308.70" y="17" width="1.3" height="4.5" fill="#000"/>
<rect x="312.90" y="17" width="1.3" height="2.2" fill="#000"/>
<rect x="316.90" y="17" width="1.3" height="4.5" fill="#000"/>
<g filter="url(#sh)" fill="#fff">
<path d="M422.1,6.4 A11.65,4.6 0 0 1 445.4,6.4 V20 A11.65,4.6 0 0 1 422.1,20 Z"/>
</g>
<path d="M422.1,9.2 A11.65,2.4 0 0 0 445.4,9.2" fill="none" stroke="#000" stroke-width="1.4"/>
<path d="M422.1,13.5 A11.65,2.8 0 0 0 445.4,13.5" fill="none" stroke="#000" stroke-width="1.4"/>
<path d="M422.1,18.0 A11.65,2.9 0 0 0 445.4,18.0" fill="none" stroke="#000" stroke-width="1.4"/>
<g filter="url(#sh)" fill="#fff">
<rect x="548.1" y="2" width="4.1" height="23" rx="1.8"/>
<rect x="564.6" y="2" width="4.1" height="23" rx="1.8"/>
<rect x="556.1" y="2.5" width="4.3" height="4.2" rx="1"/>
<rect x="556.1" y="8.3" width="4.3" height="4.2" rx="1"/>
<rect x="556.1" y="14.2" width="4.3" height="4.2" rx="1"/>
<rect x="556.1" y="20.3" width="4.3" height="4.2" rx="1"/>
<rect x="671.1" y="3.2" width="22.9" height="4.1" rx="1.8"/>
<rect x="671.1" y="19.6" width="22.9" height="4.1" rx="1.8"/>
<rect x="671.5" y="11.1" width="4.5" height="4.5" rx="1.3"/>
<rect x="677.5" y="11.1" width="4.5" height="4.5" rx="1.3"/>
<rect x="683.5" y="11.1" width="4.5" height="4.5" rx="1.3"/>
<rect x="689.5" y="11.1" width="4.5" height="4.5" rx="1.3"/>
<path d="M796,8.05 H800.2 V3.0 H805.3 V8.05 H809.4 V3.0 H814.6 V8.05 H818.5" fill="none" stroke="#fff" stroke-width="2"/>
<polygon points="796,15.6 808,15.6 808,12.5 818.2,18.4 808,24.5 808,21 796,21"/>
<circle cx="1055" cy="12.3" r="8.9" fill="none" stroke="#fff" stroke-width="2.3"/>
<line x1="1061.3" y1="18.6" x2="1066.8" y2="23.8" stroke="#fff" stroke-width="3.6"/>
</g>
<path d="M1051.7,9.5 H1058.3 L1052.1,15.4 H1058.9" fill="none" stroke="#fff" stroke-width="1.9" stroke-linejoin="miter"/>
<g filter="url(#sh)" fill="#fff">
<rect x="924.1" y="2" width="2.6" height="18.4"/>
<rect x="920" y="5.8" width="19.6" height="2.4"/>
<rect x="937.3" y="5.8" width="2.3" height="19.2"/>
<rect x="924.1" y="18" width="18.9" height="2.5"/>
</g>
<rect x="926.7" y="8.2" width="10.6" height="9.8" fill="#4e4a4e"/>
<line x1="928.5" y1="17" x2="936.5" y2="9" stroke="#fff" stroke-width="1" stroke-dasharray="1.5 1.5"/>
<text transform="translate(28.23,45.00) scale(0.9000,1)" x="0" y="0" font-family="Liberation Sans" font-size="18.31" font-weight="bold" fill="#000" style="font-kerning:none" textLength="73.44" lengthAdjust="spacing">System</text>
<text transform="translate(27.23,44.00) scale(0.9000,1)" x="0" y="0" font-family="Liberation Sans" font-size="18.31" font-weight="bold" fill="#cdcacd" style="font-kerning:none" textLength="73.44" lengthAdjust="spacing">System</text>
<text transform="translate(146.90,45.00) scale(0.9000,1)" x="0" y="0" font-family="Liberation Sans" font-size="18.31" font-weight="bold" fill="#000" style="font-kerning:none" textLength="84.58" lengthAdjust="spacing">Function</text>
<text transform="translate(145.90,44.00) scale(0.9000,1)" x="0" y="0" font-family="Liberation Sans" font-size="18.31" font-weight="bold" fill="#cdcacd" style="font-kerning:none" textLength="84.58" lengthAdjust="spacing">Function</text>
<text transform="translate(271.90,45.00) scale(0.9000,1)" x="0" y="0" font-family="Liberation Sans" font-size="18.31" font-weight="bold" fill="#000" style="font-kerning:none" textLength="79.63" lengthAdjust="spacing">Measure</text>
<text transform="translate(270.90,44.00) scale(0.9000,1)" x="0" y="0" font-family="Liberation Sans" font-size="18.31" font-weight="bold" fill="#cdcacd" style="font-kerning:none" textLength="79.63" lengthAdjust="spacing">Measure</text>
<text transform="translate(398.90,45.00) scale(0.9000,1)" x="0" y="0" font-family="Liberation Sans" font-size="18.31" font-weight="bold" fill="#000" style="font-kerning:none" textLength="75.95" lengthAdjust="spacing">Browser</text>
<text transform="translate(397.90,44.00) scale(0.9000,1)" x="0" y="0" font-family="Liberation Sans" font-size="18.31" font-weight="bold" fill="#cdcacd" style="font-kerning:none" textLength="75.95" lengthAdjust="spacing">Browser</text>
<text transform="translate(521.34,45.00) scale(0.8812,1)" x="0" y="0" font-family="Liberation Sans" font-size="18.31" font-weight="bold" fill="#000" style="font-kerning:none" textLength="60.04" lengthAdjust="spacing">Cursor</text>
<text transform="translate(520.34,44.00) scale(0.8812,1)" x="0" y="0" font-family="Liberation Sans" font-size="18.31" font-weight="bold" fill="#cdcacd" style="font-kerning:none" textLength="60.04" lengthAdjust="spacing">Cursor</text>
<text transform="translate(584.88,45.00) scale(0.7567,1)" x="0" y="0" font-family="Liberation Sans" font-size="18.31" font-weight="bold" fill="#000" style="font-kerning:none" textLength="12.22" lengthAdjust="spacing">X</text>
<text transform="translate(583.88,44.00) scale(0.7567,1)" x="0" y="0" font-family="Liberation Sans" font-size="18.31" font-weight="bold" fill="#cdcacd" style="font-kerning:none" textLength="12.22" lengthAdjust="spacing">X</text>
<text transform="translate(645.34,45.00) scale(0.8812,1)" x="0" y="0" font-family="Liberation Sans" font-size="18.31" font-weight="bold" fill="#000" style="font-kerning:none" textLength="60.04" lengthAdjust="spacing">Cursor</text>
<text transform="translate(644.34,44.00) scale(0.8812,1)" x="0" y="0" font-family="Liberation Sans" font-size="18.31" font-weight="bold" fill="#cdcacd" style="font-kerning:none" textLength="60.04" lengthAdjust="spacing">Cursor</text>
<text transform="translate(708.72,45.00) scale(0.9000,1)" x="0" y="0" font-family="Liberation Sans" font-size="18.31" font-weight="bold" fill="#000" style="font-kerning:none" textLength="12.83" lengthAdjust="spacing">Y</text>
<text transform="translate(707.72,44.00) scale(0.9000,1)" x="0" y="0" font-family="Liberation Sans" font-size="18.31" font-weight="bold" fill="#cdcacd" style="font-kerning:none" textLength="12.83" lengthAdjust="spacing">Y</text>
<text transform="translate(757.53,45.00) scale(0.9000,1)" x="0" y="0" font-family="Liberation Sans" font-size="18.31" font-weight="bold" fill="#000" style="font-kerning:none" textLength="46.71" lengthAdjust="spacing">Save</text>
<text transform="translate(756.53,44.00) scale(0.9000,1)" x="0" y="0" font-family="Liberation Sans" font-size="18.31" font-weight="bold" fill="#cdcacd" style="font-kerning:none" textLength="46.71" lengthAdjust="spacing">Save</text>
<text transform="translate(811.05,45.00) scale(0.9000,1)" x="0" y="0" font-family="Liberation Sans" font-size="18.31" font-weight="bold" fill="#000" style="font-kerning:none" textLength="50.57" lengthAdjust="spacing">wave</text>
<text transform="translate(810.05,44.00) scale(0.9000,1)" x="0" y="0" font-family="Liberation Sans" font-size="18.31" font-weight="bold" fill="#cdcacd" style="font-kerning:none" textLength="50.57" lengthAdjust="spacing">wave</text>
<text transform="translate(883.53,45.00) scale(0.9000,1)" x="0" y="0" font-family="Liberation Sans" font-size="18.31" font-weight="bold" fill="#000" style="font-kerning:none" textLength="108.53" lengthAdjust="spacing">Screenshot</text>
<text transform="translate(882.53,44.00) scale(0.9000,1)" x="0" y="0" font-family="Liberation Sans" font-size="18.31" font-weight="bold" fill="#cdcacd" style="font-kerning:none" textLength="108.53" lengthAdjust="spacing">Screenshot</text>
<text transform="translate(1034.51,45.00) scale(0.8928,1)" x="0" y="0" font-family="Liberation Sans" font-size="18.31" font-weight="bold" fill="#000" style="font-kerning:none" textLength="49.85" lengthAdjust="spacing">Zoom</text>
<text transform="translate(1033.51,44.00) scale(0.8928,1)" x="0" y="0" font-family="Liberation Sans" font-size="18.31" font-weight="bold" fill="#cdcacd" style="font-kerning:none" textLength="49.85" lengthAdjust="spacing">Zoom</text>
<g filter="url(#sh)">
<circle cx="1159.2" cy="39.7" r="15" fill="none" stroke="#00e600" stroke-width="2.6"/>
<rect x="1152.9" y="32.5" width="4.5" height="14.5" rx="1.5" fill="#00e600"/>
<rect x="1161.2" y="32.5" width="4.5" height="14.5" rx="1.5" fill="#00e600"/>
</g>
<g filter="url(#sh)">
<path d="M1155.78,140.72 A14,14 0 1 1 1166.4,139.32" fill="none" stroke="#1a8cff" stroke-width="2.8"/>
<polygon points="1158.5,144.3 1169,144.3 1163,136" fill="#1a8cff"/>
<text x="1152.52" y="132.80" font-family="Liberation Sans" font-size="20.49" font-weight="bold" fill="#1a8cff" style="font-kerning:none" textLength="13.99" lengthAdjust="spacingAndGlyphs">A</text>
</g>
<circle cx="1160.4" cy="216.6" r="13.8" fill="none" stroke="#000" stroke-width="3.6"/>
<circle cx="1159.4" cy="215.6" r="13.8" fill="none" stroke="#ffffff" stroke-width="3.6"/>
<circle cx="1159.4" cy="215.6" r="3.8" fill="#ffffff"/>
<circle cx="1160.4" cy="304.9" r="14.4" fill="none" stroke="#000" stroke-width="2.6"/>
<circle cx="1159.4" cy="303.9" r="14.4" fill="none" stroke="#ffffff" stroke-width="2.6"/>
<rect x="1152.6" y="302" width="13.6" height="5" rx="2" fill="#ffffff"/>
<rect x="1157.2" y="296.5" width="5.2" height="15" rx="2" fill="#ffffff"/>
<text transform="translate(1144.88,403.90) scale(0.5000,1)" x="0" y="0" font-family="Liberation Sans" font-size="30.38" font-weight="bold" fill="#000" style="font-kerning:none" textLength="67.86" lengthAdjust="spacing">CH2</text>
<text transform="translate(1143.88,402.90) scale(0.5000,1)" x="0" y="0" font-family="Liberation Sans" font-size="30.38" font-weight="bold" fill="#3aa8f0" style="font-kerning:none" textLength="67.86" lengthAdjust="spacing">CH2</text>
<circle cx="1160.4" cy="479.1" r="14.4" fill="none" stroke="#000" stroke-width="2.6"/>
<circle cx="1159.4" cy="478.1" r="14.4" fill="none" stroke="#ffffff" stroke-width="2.6"/>
<rect x="1153" y="475.5" width="13" height="5" rx="2.5" fill="#ffffff"/>
<g stroke="#000" stroke-width="0.6" transform="translate(1,1)">
<text x="1142.88" y="577.60" font-family="Liberation Sans" font-size="28.20" font-weight="bold" fill="#000" style="font-kerning:none" textLength="22.56" lengthAdjust="spacingAndGlyphs">50</text>
</g>
<g stroke="#fff" stroke-width="0.6">
<text x="1142.88" y="577.60" font-family="Liberation Sans" font-size="28.20" font-weight="bold" fill="#fff" style="font-kerning:none" textLength="22.56" lengthAdjust="spacingAndGlyphs">50</text>
</g>
<text x="1167.19" y="579.00" font-family="Liberation Sans" font-size="18.17" font-weight="bold" fill="#000" style="font-kerning:none" textLength="10.93" lengthAdjust="spacingAndGlyphs">%</text>
<text x="1166.19" y="578.00" font-family="Liberation Sans" font-size="18.17" font-weight="bold" fill="#fff" style="font-kerning:none" textLength="10.93" lengthAdjust="spacingAndGlyphs">%</text>
<polygon points="1144.2,657.4 1155.5,643 1178,643 1178,671.8 1155.5,671.8" fill="#000"/>
<polygon points="1143.2,656.4 1154.5,642 1177,642 1177,670.8 1154.5,670.8" fill="#9a1ff0"/>
<rect x="1158.00" y="649.00" width="13.50" height="3.00" fill="#000" />
<rect x="1163.00" y="652.00" width="4.00" height="15.00" fill="#000" />
</svg></body></html>
